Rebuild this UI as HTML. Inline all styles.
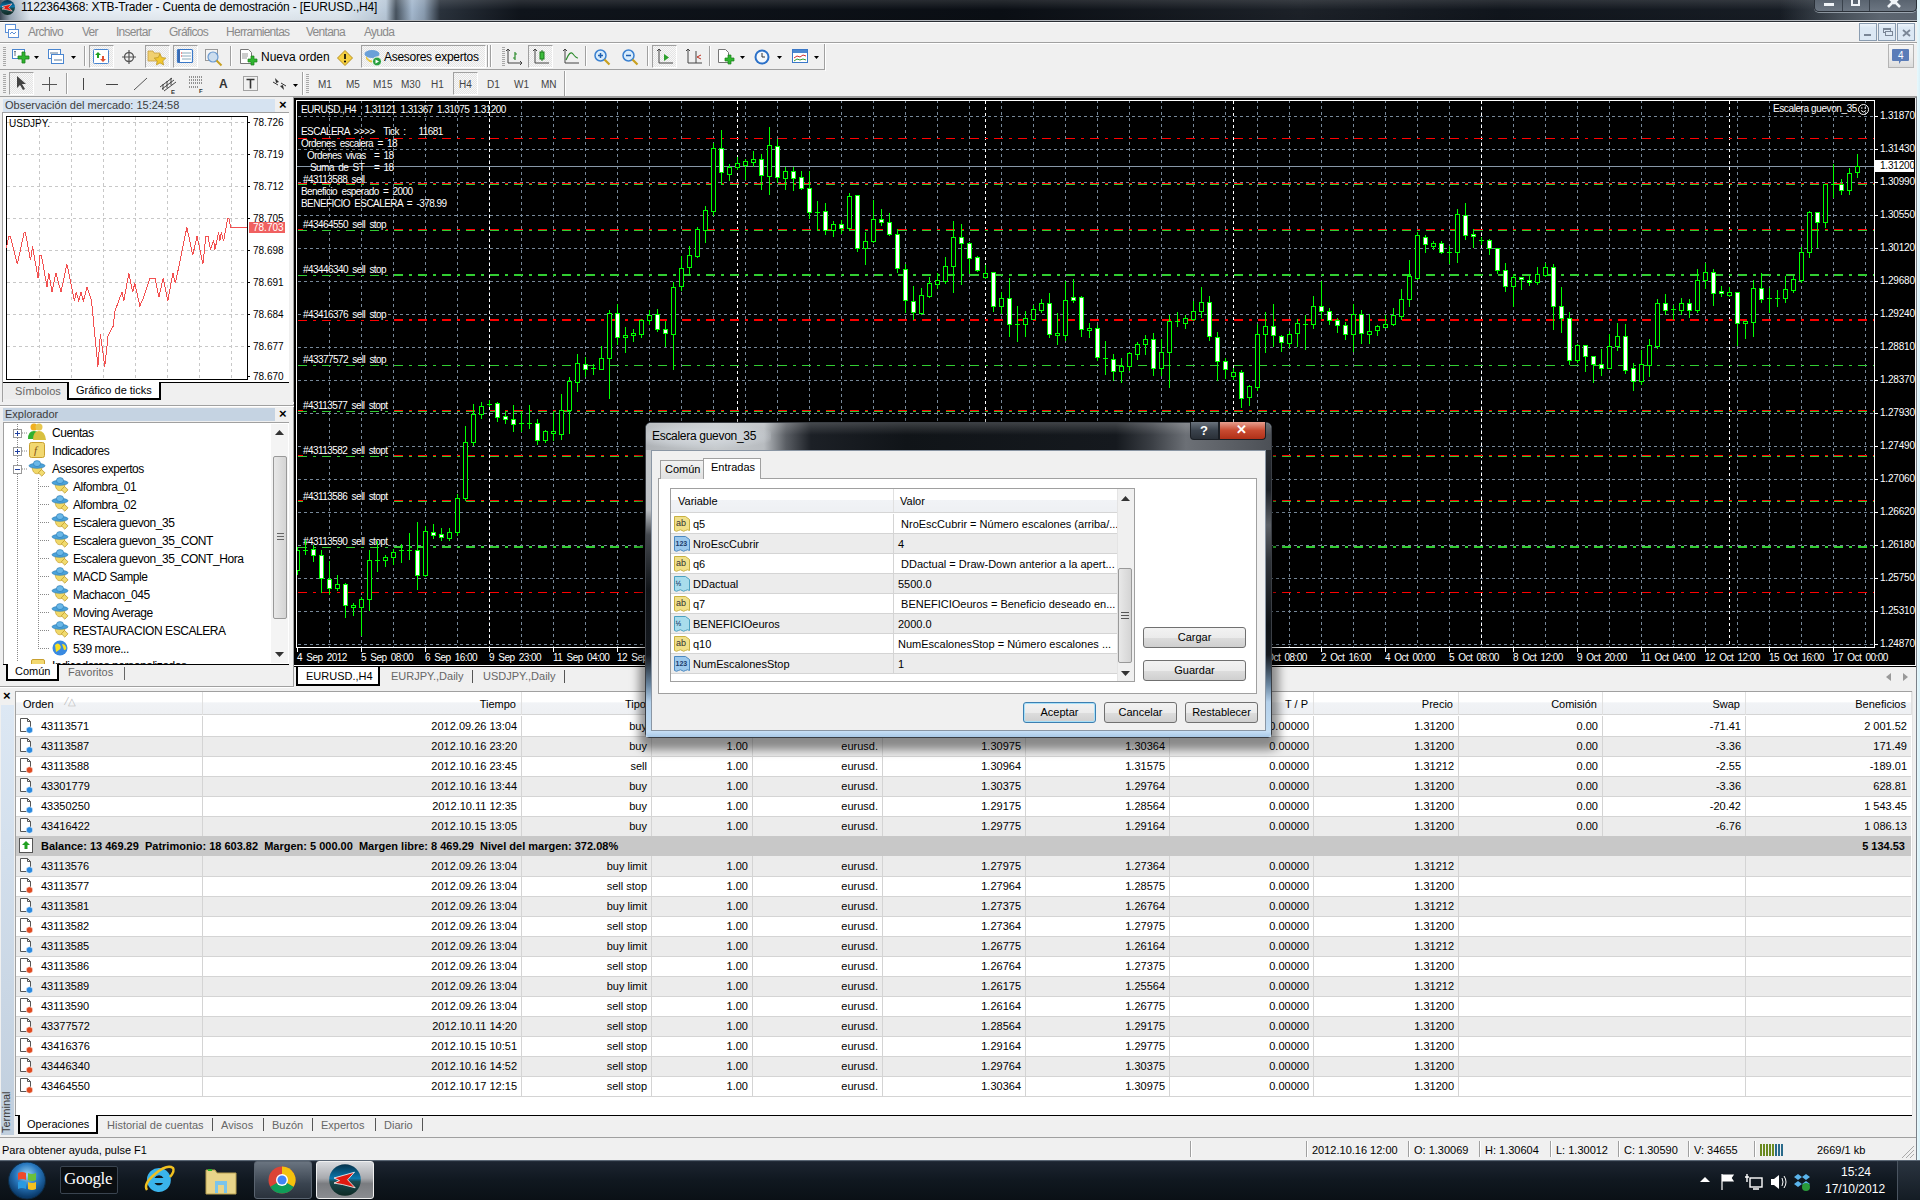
<!DOCTYPE html><html><head><meta charset="utf-8"><style>
*{margin:0;padding:0;box-sizing:border-box}
html,body{width:1920px;height:1200px;overflow:hidden;background:#f0f0f0;font-family:"Liberation Sans",sans-serif;font-size:11px;color:#000}
.abs{position:absolute}
.t{position:absolute;white-space:nowrap;line-height:1}
svg{position:absolute;overflow:visible}
</style></head><body>
<div class="abs" style="left:0px;top:0px;width:1920px;height:20px;background:linear-gradient(90deg,#3a4652 0px,#9aa8b6 10px,#e2eaf2 30px,#eaf0f6 200px,#dfe8f0 340px,#b8c8d8 386px,#46525e 396px,#a4b8ce 412px,#8a9cb0 424px,#2a323c 440px,#0f141b 520px,#0a0e14 1000px,#1c2128 1300px,#10151c 1500px,#1a2028 1920px)"></div><div class="abs" style="left:0px;top:0px;width:1920px;height:20px;background:linear-gradient(180deg,rgba(255,255,255,.12) 0,rgba(255,255,255,0) 50%,rgba(0,0,0,.04) 100%)"></div><div class="abs" style="left:0px;top:20px;width:1920px;height:1px;background:#b4b8bd"></div><svg style="left:0px;top:0px" width="16" height="16" viewBox="0 0 16 16"><defs><linearGradient id="xtbt" x1="0" y1="0" x2="0" y2="1"><stop offset="0" stop-color="#06324a"/><stop offset=".45" stop-color="#0a78ae"/><stop offset=".55" stop-color="#1a4a50"/><stop offset="1" stop-color="#0e2a24"/></linearGradient></defs><circle cx="7.5" cy="7.5" r="7.5" fill="url(#xtbt)"/><path d="M2 6.5 L12 3.8 L8.7 7.4 L12.3 11.2 L6.4 9.7 L2 9 L4.8 7.8 Z" fill="#e01a10" stroke="#fff" stroke-width="0.5"/></svg><div class="t" style="left:21px;top:1px;font-size:12px;color:#000;letter-spacing:-0.16px">1122364368: XTB-Trader - Cuenta de demostración - [EURUSD.,H4]</div><div class="abs" style="left:1780px;top:0px;width:140px;height:20px;background:linear-gradient(90deg,rgba(90,100,110,0) 0,rgba(90,100,110,.7) 60px,#5c6570 100px,#5a636e 140px)"></div><div class="abs" style="left:1814px;top:0px;width:103px;height:12px;border:1px solid #2a3038;border-top:none;border-radius:0 0 5px 5px;background:linear-gradient(180deg,#5a6470,#6c7682);box-shadow:0 1px 0 rgba(220,230,240,.5)"></div><div class="abs" style="left:1842px;top:0px;width:1px;height:11px;background:#3a424c"></div><div class="abs" style="left:1869px;top:0px;width:1px;height:11px;background:#3a424c"></div><div class="abs" style="left:1824px;top:3px;width:10px;height:3px;background:#f0f4f8"></div><div class="abs" style="left:1851px;top:0px;width:9px;height:6px;border:2px solid #f0f4f8;border-top:none"></div><svg style="left:1887px;top:0px" width="14" height="7" viewBox="0 0 14 7"><path d="M1 -3L7 3L13 -3M1 7L7 1L13 7" stroke="#f0f4f8" stroke-width="2.6" fill="none"/></svg><div class="abs" style="left:0px;top:21px;width:1920px;height:1px;background:#2a2e34"></div><div class="abs" style="left:0px;top:22px;width:1920px;height:1px;background:#fff"></div><div class="abs" style="left:0px;top:23px;width:1920px;height:19px;background:#f0f0f0"></div><div class="abs" style="left:0px;top:42px;width:1920px;height:1px;background:#a0a0a0"></div><svg style="left:5px;top:24px" width="15" height="14" viewBox="0 0 15 14"><rect x="0.5" y="0.5" width="10" height="8" fill="#fff" stroke="#5b8fd6"/><rect x="3.5" y="5.5" width="10" height="8" fill="#fff" stroke="#5b8fd6"/><path d="M5 10 l2 -2 l2 2 l2 -2" stroke="#5b8fd6" fill="none"/></svg><div class="t" style="left:28px;top:26px;font-size:12px;color:#8a8a8a;letter-spacing:-0.72px">Archivo</div><div class="t" style="left:82px;top:26px;font-size:12px;color:#8a8a8a;letter-spacing:-0.72px">Ver</div><div class="t" style="left:116px;top:26px;font-size:12px;color:#8a8a8a;letter-spacing:-0.72px">Insertar</div><div class="t" style="left:169px;top:26px;font-size:12px;color:#8a8a8a;letter-spacing:-0.72px">Gráficos</div><div class="t" style="left:226px;top:26px;font-size:12px;color:#8a8a8a;letter-spacing:-0.72px">Herramientas</div><div class="t" style="left:306px;top:26px;font-size:12px;color:#8a8a8a;letter-spacing:-0.72px">Ventana</div><div class="t" style="left:364px;top:26px;font-size:12px;color:#8a8a8a;letter-spacing:-0.72px">Ayuda</div><div class="abs" style="left:1859px;top:23px;width:18px;height:18px;border:1px solid #8a9cb0;background:linear-gradient(180deg,#eef4fa 0,#dce8f4 25%,#dce8f4 100%)"></div><div class="abs" style="left:1878px;top:23px;width:18px;height:18px;border:1px solid #8a9cb0;background:linear-gradient(180deg,#eef4fa 0,#dce8f4 25%,#dce8f4 100%)"></div><div class="abs" style="left:1897px;top:23px;width:18px;height:18px;border:1px solid #8a9cb0;background:linear-gradient(180deg,#eef4fa 0,#dce8f4 25%,#dce8f4 100%)"></div><div class="abs" style="left:1864px;top:34px;width:7px;height:2px;background:#7a8696"></div><div class="abs" style="left:1883px;top:28px;width:8px;height:5px;border:1px solid #7a8696;border-top-width:2px"></div><div class="abs" style="left:1885px;top:31px;width:8px;height:5px;border:1px solid #7a8696;background:#dce8f4"></div><svg style="left:1902px;top:29px" width="9" height="8" viewBox="0 0 9 8"><path d="M1 1L8 7M8 1L1 7" stroke="#7a8696" stroke-width="1.8"/></svg><div class="abs" style="left:0px;top:43px;width:1920px;height:26px;background:#f0f0f0"></div><div class="abs" style="left:0px;top:69px;width:825px;height:1px;background:#a0a0a0"></div><div class="abs" style="left:0px;top:70px;width:826px;height:1px;background:#fff"></div><div class="abs" style="left:0px;top:43px;width:1916px;height:1px;background:#fff"></div><div class="abs" style="left:0px;top:70px;width:1920px;height:26px;background:#f0f0f0"></div><div class="abs" style="left:0px;top:96px;width:1920px;height:1px;background:#a0a0a0"></div><div class="abs" style="left:3px;top:47px;width:3px;height:19px;background:repeating-linear-gradient(180deg,#a8a8a8 0 1px,transparent 1px 2px)"></div><svg style="left:12px;top:49px" width="17" height="15" viewBox="0 0 17 15"><rect x="0.5" y="0.5" width="12" height="9" fill="#fff" stroke="#4a86d0"/><path d="M3 2v5M2 3l1-1 1 1" stroke="#6a7a8a" fill="none"/><path d="M9 6h4v-4h3v4h4v3h-4v4h-3v-4h-4z" transform="translate(-3,1)" fill="#2fb52f" stroke="#1a7f1a" stroke-width="0.8"/></svg><svg style="left:34px;top:56px" width="5" height="3" viewBox="0 0 5 3"><path d="M0 0h5l-2.5 3z" fill="#000"/></svg><svg style="left:48px;top:49px" width="18" height="16" viewBox="0 0 18 16"><rect x="0.5" y="0.5" width="12" height="9" fill="#fff" stroke="#4a86d0"/><rect x="3.5" y="5.5" width="12" height="9" fill="#fff" stroke="#4a86d0"/><path d="M2 4h8M6 11h8" stroke="#5a7a9a"/></svg><svg style="left:71px;top:56px" width="5" height="3" viewBox="0 0 5 3"><path d="M0 0h5l-2.5 3z" fill="#000"/></svg><div class="abs" style="left:84px;top:46px;width:1px;height:20px;background:#a0a0a0"></div><div class="abs" style="left:85px;top:46px;width:1px;height:20px;background:#fff"></div><div class="abs" style="left:89px;top:45px;width:25px;height:23px;border-top:1px solid #a0a0a0;border-left:1px solid #a0a0a0;border-right:1px solid #fff;border-bottom:1px solid #fff;background:repeating-conic-gradient(#f8f8f8 0 25%,#e4e4e4 0 50%) 0 0/2px 2px"></div><svg style="left:93px;top:49px" width="17" height="16" viewBox="0 0 17 16"><rect x="0.5" y="0.5" width="15" height="14" fill="#fff" stroke="#4a86d0" rx="1"/><path d="M5 3l-3 3h2v3h2v-3h2z" fill="#20a020"/><path d="M10 13l3-3h-2v-3h-2v3h-2z" fill="#e05030"/></svg><svg style="left:122px;top:50px" width="15" height="15" viewBox="0 0 15 15"><circle cx="7" cy="7" r="4.5" fill="none" stroke="#555" stroke-width="1.3"/><path d="M7 0v14M0 7h14" stroke="#555" stroke-width="1.2"/></svg><div class="abs" style="left:145px;top:45px;width:25px;height:23px;border-top:1px solid #a0a0a0;border-left:1px solid #a0a0a0;border-right:1px solid #fff;border-bottom:1px solid #fff;background:repeating-conic-gradient(#f8f8f8 0 25%,#e4e4e4 0 50%) 0 0/2px 2px"></div><svg style="left:148px;top:49px" width="18" height="16" viewBox="0 0 18 16"><path d="M0 2h5l1 2h6v8h-12z" fill="#f0d070" stroke="#c8a040" stroke-width="0.8"/><path d="M12 5l1.8 3.6 4 .5-3 2.8.8 4-3.6-2-3.6 2 .8-4-3-2.8 4-.5z" fill="#f2c830" stroke="#b89020" stroke-width="0.7"/></svg><div class="abs" style="left:173px;top:45px;width:25px;height:23px;border-top:1px solid #a0a0a0;border-left:1px solid #a0a0a0;border-right:1px solid #fff;border-bottom:1px solid #fff;background:repeating-conic-gradient(#f8f8f8 0 25%,#e4e4e4 0 50%) 0 0/2px 2px"></div><svg style="left:177px;top:49px" width="16" height="15" viewBox="0 0 16 15"><rect x="0.5" y="0.5" width="15" height="13" fill="#fff" stroke="#3a78c8" stroke-width="1.2" rx="1"/><rect x="1" y="1" width="2" height="12" fill="#3a6ab0"/><path d="M5 4h9M5 7h9M5 10h9" stroke="#8ab"/><path d="M4 4h1M4 7h1" stroke="#d22"/></svg><svg style="left:205px;top:49px" width="18" height="18" viewBox="0 0 18 18"><rect x="0.5" y="0.5" width="12" height="11" fill="#f4f4f4" stroke="#999"/><circle cx="8" cy="8" r="5" fill="#cde" stroke="#6a9ad0" stroke-width="1.2"/><path d="M11.5 11.5l5 5" stroke="#c8a020" stroke-width="2"/></svg><div class="abs" style="left:230px;top:46px;width:1px;height:20px;background:#a0a0a0"></div><div class="abs" style="left:231px;top:46px;width:1px;height:20px;background:#fff"></div><svg style="left:240px;top:49px" width="18" height="18" viewBox="0 0 18 18"><path d="M0.5 0.5h8l3 3v11h-11z" fill="#fff" stroke="#777"/><path d="M2 5h6M2 7h6M2 9h5" stroke="#999"/><path d="M8 10h3v-3h3v3h3v3h-3v3h-3v-3h-3z" fill="#2fb52f" stroke="#1a7f1a" stroke-width="0.7"/></svg><div class="t" style="left:261px;top:51px;font-size:12px;color:#000">Nueva orden</div><svg style="left:337px;top:50px" width="16" height="16" viewBox="0 0 16 16"><path d="M8 0.5l7.5 7.5-7.5 7.5-7.5-7.5z" fill="#f5d040" stroke="#b89020"/><path d="M8 4v5" stroke="#000" stroke-width="1.6"/><circle cx="8" cy="11.5" r="1" fill="#000"/></svg><div class="abs" style="left:361px;top:45px;width:125px;height:23px;border-top:1px solid #a0a0a0;border-left:1px solid #a0a0a0;border-right:1px solid #fff;border-bottom:1px solid #fff;background:repeating-conic-gradient(#f8f8f8 0 25%,#e4e4e4 0 50%) 0 0/2px 2px"></div><svg style="left:364px;top:49px" width="18" height="17" viewBox="0 0 18 17"><ellipse cx="8" cy="5" rx="7.5" ry="4" fill="#6aa0d8"/><path d="M2 7q6 9 12 0v3q-6 7-12 0z" fill="#e8c840"/><circle cx="13" cy="12.5" r="4.5" fill="#2aa040" stroke="#fff"/><path d="M11.5 10.5l3.5 2-3.5 2z" fill="#fff"/></svg><div class="t" style="left:384px;top:51px;font-size:12px;color:#000;letter-spacing:-0.28px">Asesores expertos</div><div class="abs" style="left:487px;top:45px;width:1px;height:22px;background:#a0a0a0"></div><div class="abs" style="left:488px;top:45px;width:1px;height:22px;background:#fff"></div><div class="abs" style="left:490px;top:45px;width:1px;height:22px;background:#a0a0a0"></div><div class="abs" style="left:491px;top:45px;width:1px;height:22px;background:#fff"></div><div class="abs" style="left:502px;top:47px;width:3px;height:19px;background:repeating-linear-gradient(180deg,#a8a8a8 0 1px,transparent 1px 2px)"></div><svg style="left:506px;top:49px" width="16" height="16" viewBox="0 0 16 16"><path d="M2 0v14h14M0 2l2-2 2 2M14 12l2 2-2 2" stroke="#444" fill="none"/><path d="M9 3v8M7 9h2M9 5h2" stroke="#2a8a2a" stroke-width="1.2"/></svg><div class="abs" style="left:528px;top:45px;width:25px;height:23px;border-top:1px solid #a0a0a0;border-left:1px solid #a0a0a0;border-right:1px solid #fff;border-bottom:1px solid #fff;background:repeating-conic-gradient(#f8f8f8 0 25%,#e4e4e4 0 50%) 0 0/2px 2px"></div><svg style="left:533px;top:49px" width="16" height="16" viewBox="0 0 16 16"><path d="M2 0v14h14M0 2l2-2 2 2" stroke="#444" fill="none"/><rect x="7" y="3" width="4" height="7" fill="#3cbc3c" stroke="#1a7a1a"/><path d="M9 1v2M9 10v2" stroke="#1a7a1a"/></svg><svg style="left:563px;top:49px" width="16" height="16" viewBox="0 0 16 16"><path d="M2 0v14h14M0 2l2-2 2 2" stroke="#444" fill="none"/><path d="M3 11q4-10 7-6t5 4" stroke="#2a8a2a" fill="none" stroke-width="1.2"/></svg><div class="abs" style="left:585px;top:46px;width:1px;height:20px;background:#a0a0a0"></div><div class="abs" style="left:586px;top:46px;width:1px;height:20px;background:#fff"></div><svg style="left:594px;top:49px" width="17" height="17" viewBox="0 0 17 17"><circle cx="6.5" cy="6.5" r="5.5" fill="#d8ecfc" stroke="#3a80d0" stroke-width="1.5"/><path d="M4 6.5h5M6.5 4v5" stroke="#2060b0" stroke-width="1.5"/><path d="M10.5 10.5l5 5" stroke="#c8a020" stroke-width="2.2"/></svg><svg style="left:622px;top:49px" width="17" height="17" viewBox="0 0 17 17"><circle cx="6.5" cy="6.5" r="5.5" fill="#d8ecfc" stroke="#3a80d0" stroke-width="1.5"/><path d="M4 6.5h5" stroke="#2060b0" stroke-width="1.5"/><path d="M10.5 10.5l5 5" stroke="#c8a020" stroke-width="2.2"/></svg><div class="abs" style="left:647px;top:46px;width:1px;height:20px;background:#a0a0a0"></div><div class="abs" style="left:648px;top:46px;width:1px;height:20px;background:#fff"></div><div class="abs" style="left:652px;top:45px;width:25px;height:23px;border-top:1px solid #a0a0a0;border-left:1px solid #a0a0a0;border-right:1px solid #fff;border-bottom:1px solid #fff;background:repeating-conic-gradient(#f8f8f8 0 25%,#e4e4e4 0 50%) 0 0/2px 2px"></div><svg style="left:657px;top:49px" width="16" height="16" viewBox="0 0 16 16"><path d="M2 0v14h14M0 2l2-2 2 2" stroke="#444" fill="none"/><path d="M7 5l5 3.5-5 3.5z" fill="#2aa02a"/></svg><svg style="left:686px;top:49px" width="16" height="16" viewBox="0 0 16 16"><path d="M2 0v14h14M0 2l2-2 2 2M10 2v12" stroke="#444" fill="none"/><path d="M15 6l-4 2 4 2" stroke="#c03020" fill="none"/></svg><div class="abs" style="left:709px;top:46px;width:1px;height:20px;background:#a0a0a0"></div><div class="abs" style="left:710px;top:46px;width:1px;height:20px;background:#fff"></div><svg style="left:718px;top:49px" width="18" height="18" viewBox="0 0 18 18"><path d="M0.5 0.5h7l3 3v10h-10z" fill="#fff" stroke="#777"/><path d="M7 9h3v-3h3v3h3v3h-3v3h-3v-3h-3z" fill="#2fb52f" stroke="#1a7f1a" stroke-width="0.7"/></svg><svg style="left:740px;top:56px" width="5" height="3" viewBox="0 0 5 3"><path d="M0 0h5l-2.5 3z" fill="#000"/></svg><svg style="left:754px;top:49px" width="17" height="17" viewBox="0 0 17 17"><circle cx="8" cy="8" r="7.5" fill="#2a70c8"/><circle cx="8" cy="8" r="5.5" fill="#f4f8fc"/><path d="M8 4v4h3" stroke="#333" fill="none"/></svg><svg style="left:777px;top:56px" width="5" height="3" viewBox="0 0 5 3"><path d="M0 0h5l-2.5 3z" fill="#000"/></svg><svg style="left:792px;top:49px" width="17" height="16" viewBox="0 0 17 16"><rect x="0.5" y="0.5" width="15" height="13" fill="#fff" stroke="#3a78c8"/><rect x="1" y="1" width="14" height="3" fill="#4a88d0"/><path d="M2 9l3-2 3 1 3-2 3 1" stroke="#d03030" fill="none"/><path d="M2 12l3-2 3 1 3-1 3 1" stroke="#30a030" fill="none"/></svg><svg style="left:814px;top:56px" width="5" height="3" viewBox="0 0 5 3"><path d="M0 0h5l-2.5 3z" fill="#000"/></svg><div class="abs" style="left:824px;top:44px;width:1px;height:26px;background:#a0a0a0"></div><div class="abs" style="left:825px;top:44px;width:1px;height:27px;background:#fff"></div><div class="abs" style="left:1888px;top:44px;width:26px;height:24px;border:1px solid #b4b4b4;background:linear-gradient(180deg,#f4f4f4 0,#ececec 55%,#dcdcdc 100%)"></div><svg style="left:1893px;top:49px" width="16" height="16" viewBox="0 0 16 16"><path d="M1 0h14q1 0 1 1v10q0 1-1 1h-7l-2 3v-3h-6q-1 0-1-1v-10q0-1 1-1z" fill="#5a7cb8"/></svg><div class="t" style="left:1898px;top:51px;font-size:10px;color:#fff">4</div><div class="abs" style="left:3px;top:74px;width:3px;height:19px;background:repeating-linear-gradient(180deg,#a8a8a8 0 1px,transparent 1px 2px)"></div><div class="abs" style="left:9px;top:72px;width:25px;height:23px;border-top:1px solid #a0a0a0;border-left:1px solid #a0a0a0;border-right:1px solid #fff;border-bottom:1px solid #fff;background:repeating-conic-gradient(#f8f8f8 0 25%,#e4e4e4 0 50%) 0 0/2px 2px"></div><svg style="left:16px;top:76px" width="10" height="15" viewBox="0 0 10 15"><path d="M1 0v12l3-3 3 5 2-1-3-5h4z" fill="#444"/></svg><svg style="left:42px;top:77px" width="16" height="15" viewBox="0 0 16 15"><path d="M7.5 0v14M0 7.5h15" stroke="#555"/></svg><div class="abs" style="left:66px;top:73px;width:1px;height:21px;background:#a0a0a0"></div><div class="abs" style="left:67px;top:73px;width:1px;height:21px;background:#fff"></div><div class="abs" style="left:83px;top:78px;width:1px;height:12px;background:#444"></div><div class="abs" style="left:106px;top:84px;width:12px;height:1px;background:#444"></div><svg style="left:134px;top:78px" width="13" height="12" viewBox="0 0 13 12"><path d="M0 12L13 0" stroke="#555"/></svg><svg style="left:160px;top:76px" width="16" height="18" viewBox="0 0 16 18"><path d="M0 11l12-9M2 13l12-9M4 15l12-9M3 8v6M7 5v7M11 2v7" stroke="#333" stroke-width="0.9"/><text x="11" y="18" font-size="6" font-family="Liberation Sans" font-weight="bold" fill="#333">E</text></svg><svg style="left:189px;top:76px" width="16" height="18" viewBox="0 0 16 18"><path d="M0 1h13M0 4h13M0 7h13M0 11h9" stroke="#333" stroke-dasharray="1 1"/><text x="10" y="17" font-size="6" font-family="Liberation Sans" font-weight="bold" fill="#333">F</text></svg><div class="t" style="left:219px;top:78px;font-size:12px;color:#333;font-weight:bold">A</div><svg style="left:243px;top:76px" width="16" height="16" viewBox="0 0 16 16"><rect x="0.5" y="0.5" width="14" height="14" fill="none" stroke="#555" stroke-dasharray="1 1"/><path d="M3.5 3.5h8M7.5 3.5v9" stroke="#333" stroke-width="1.6"/></svg><svg style="left:273px;top:77px" width="18" height="14" viewBox="0 0 18 14"><path d="M2 1l4 4-3 1z" fill="#333"/><path d="M0 5l5 3" stroke="#333"/><path d="M11 13l-4-4 3-1z" fill="#333"/><path d="M13 9l-5-3" stroke="#333"/></svg><svg style="left:293px;top:84px" width="5" height="3" viewBox="0 0 5 3"><path d="M0 0h5l-2.5 3z" fill="#000"/></svg><div class="abs" style="left:302px;top:72px;width:1px;height:23px;background:#a0a0a0"></div><div class="abs" style="left:303px;top:72px;width:1px;height:23px;background:#fff"></div><div class="abs" style="left:306px;top:74px;width:3px;height:19px;background:repeating-linear-gradient(180deg,#a8a8a8 0 1px,transparent 1px 2px)"></div><div class="t" style="left:318px;top:80px;font-size:10px;color:#444">M1</div><div class="t" style="left:346px;top:80px;font-size:10px;color:#444">M5</div><div class="t" style="left:373px;top:80px;font-size:10px;color:#444">M15</div><div class="t" style="left:401px;top:80px;font-size:10px;color:#444">M30</div><div class="t" style="left:431px;top:80px;font-size:10px;color:#444">H1</div><div class="abs" style="left:453px;top:72px;width:25px;height:23px;border-top:1px solid #a0a0a0;border-left:1px solid #a0a0a0;border-right:1px solid #fff;border-bottom:1px solid #fff;background:repeating-conic-gradient(#f8f8f8 0 25%,#e4e4e4 0 50%) 0 0/2px 2px"></div><div class="t" style="left:459px;top:80px;font-size:10px;color:#444">H4</div><div class="t" style="left:487px;top:80px;font-size:10px;color:#444">D1</div><div class="t" style="left:514px;top:80px;font-size:10px;color:#444">W1</div><div class="t" style="left:541px;top:80px;font-size:10px;color:#444">MN</div><div class="abs" style="left:564px;top:71px;width:1px;height:25px;background:#a0a0a0"></div><div class="abs" style="left:565px;top:71px;width:1px;height:25px;background:#fff"></div><div class="abs" style="left:0px;top:97px;width:294px;height:591px;background:#f0f0f0"></div><div class="abs" style="left:293px;top:97px;width:1px;height:591px;background:#a0a0a0"></div><div class="abs" style="left:3px;top:99px;width:272px;height:13px;background:#d6e3f1"></div><div class="t" style="left:5px;top:100px;font-size:11px;color:#3c3c3c">Observación del mercado: 15:24:58</div><div class="t" style="left:279px;top:98px;font-size:13px;font-weight:bold;color:#000">×</div><div class="abs" style="left:3px;top:112px;width:286px;height:1px;background:#a0a0a0"></div><div class="abs" style="left:3px;top:113px;width:286px;height:269px;background:#fff"></div><div class="abs" style="left:2px;top:112px;width:1px;height:290px;background:#a0a0a0"></div><div class="abs" style="left:6px;top:116px;width:242px;height:264px;border:1px solid #000;background:#fff"></div><svg style="left:6px;top:116px" width="242" height="264" viewBox="0 0 242 264"><path d="M33.5 1V263" stroke="#c8c8c8" stroke-dasharray="3 3"/><path d="M65.5 1V263" stroke="#c8c8c8" stroke-dasharray="3 3"/><path d="M97.5 1V263" stroke="#c8c8c8" stroke-dasharray="3 3"/><path d="M129.5 1V263" stroke="#c8c8c8" stroke-dasharray="3 3"/><path d="M161.5 1V263" stroke="#c8c8c8" stroke-dasharray="3 3"/><path d="M193.5 1V263" stroke="#c8c8c8" stroke-dasharray="3 3"/><path d="M225.5 1V263" stroke="#c8c8c8" stroke-dasharray="3 3"/><path d="M1 6.5H240" stroke="#c8c8c8" stroke-dasharray="3 3"/><path d="M1 38.5H240" stroke="#c8c8c8" stroke-dasharray="3 3"/><path d="M1 70.5H240" stroke="#c8c8c8" stroke-dasharray="3 3"/><path d="M1 102.5H240" stroke="#c8c8c8" stroke-dasharray="3 3"/><path d="M1 134.5H240" stroke="#c8c8c8" stroke-dasharray="3 3"/><path d="M1 166.5H240" stroke="#c8c8c8" stroke-dasharray="3 3"/><path d="M1 198.5H240" stroke="#c8c8c8" stroke-dasharray="3 3"/><path d="M1 230.5H240" stroke="#c8c8c8" stroke-dasharray="3 3"/></svg><div class="abs" style="left:248px;top:122px;width:2px;height:1px;background:#000"></div><div class="t" style="left:253px;top:118px;font-size:10px;color:#000">78.726</div><div class="abs" style="left:248px;top:154px;width:2px;height:1px;background:#000"></div><div class="t" style="left:253px;top:150px;font-size:10px;color:#000">78.719</div><div class="abs" style="left:248px;top:186px;width:2px;height:1px;background:#000"></div><div class="t" style="left:253px;top:182px;font-size:10px;color:#000">78.712</div><div class="abs" style="left:248px;top:218px;width:2px;height:1px;background:#000"></div><div class="t" style="left:253px;top:214px;font-size:10px;color:#000">78.705</div><div class="abs" style="left:248px;top:250px;width:2px;height:1px;background:#000"></div><div class="t" style="left:253px;top:246px;font-size:10px;color:#000">78.698</div><div class="abs" style="left:248px;top:282px;width:2px;height:1px;background:#000"></div><div class="t" style="left:253px;top:278px;font-size:10px;color:#000">78.691</div><div class="abs" style="left:248px;top:314px;width:2px;height:1px;background:#000"></div><div class="t" style="left:253px;top:310px;font-size:10px;color:#000">78.684</div><div class="abs" style="left:248px;top:346px;width:2px;height:1px;background:#000"></div><div class="t" style="left:253px;top:342px;font-size:10px;color:#000">78.677</div><div class="abs" style="left:248px;top:376px;width:2px;height:1px;background:#000"></div><div class="t" style="left:253px;top:372px;font-size:10px;color:#000">78.670</div><div class="abs" style="left:249px;top:222px;width:36px;height:11px;background:#f06060"></div><div class="t" style="left:253px;top:223px;font-size:10px;color:#fff">78.703</div><div class="t" style="left:9px;top:119px;font-size:10px;color:#000">USDJPY.</div><svg style="left:0px;top:0px" width="300" height="400" viewBox="0 0 300 400"><path d="M6.4 247.6 L8.9 236.1 L10.2 236.1 L17.3 264.1 L24.2 232.3 L25.4 232.3 L30.5 260.3 L32.5 246.3 L38.1 278.1 L39.9 255.2 L41.4 255.2 L47.0 287.0 L48.8 273.0 L52.1 292.1 L55.9 273.0 L61.0 292.1 L66.9 264.1 L74.5 300.9 L76.3 292.1 L78.8 300.9 L80.9 292.1 L83.4 300.9 L87.0 287.0 L91.5 300.9 L97.9 366.5 L100.4 334.0 L104.8 366.5 L108.1 335.3 L113.1 326.4 L114.9 311.1 L122.0 292.1 L123.8 300.9 L128.9 273.0 L132.7 292.1 L134.8 283.2 L139.8 306.0 L143.7 297.1 L150.0 278.1 L155.1 278.1 L158.9 297.1 L163.2 278.1 L167.8 300.9 L172.9 273.0 L175.4 283.2 L186.9 227.2 L192.7 255.2 L197.1 236.1 L202.9 264.1 L205.9 236.1 L208.0 236.1 L210.5 250.1 L213.6 239.9 L214.8 250.1 L218.7 232.3 L219.9 241.2 L221.2 232.3 L223.7 241.2 L227.6 218.3 L228.8 218.3 L230.6 227.2 L247.1 227.2" stroke="#f25050" fill="none" stroke-width="1" shape-rendering="crispEdges"/></svg><div class="abs" style="left:3px;top:380px;width:286px;height:2px;background:#fff"></div><div class="abs" style="left:3px;top:382px;width:286px;height:1px;background:#000"></div><div class="abs" style="left:4px;top:383px;width:63px;height:16px;background:#ececec"></div><div class="t" style="left:15px;top:386px;font-size:11px;color:#666">Símbolos</div><div class="abs" style="left:67px;top:382px;width:94px;height:18px;border:2px solid #000;border-top:none;background:#fff"></div><div class="t" style="left:76px;top:385px;font-size:11px;color:#000">Gráfico de ticks</div><div class="abs" style="left:0px;top:402px;width:294px;height:2px;background:#f0f0f0"></div><div class="abs" style="left:0px;top:405px;width:294px;height:1px;background:#a0a0a0"></div><div class="abs" style="left:0px;top:406px;width:294px;height:1px;background:#fff"></div><div class="abs" style="left:3px;top:408px;width:272px;height:13px;background:#c5d3e2"></div><div class="t" style="left:5px;top:409px;font-size:11px;color:#3c3c3c">Explorador</div><div class="t" style="left:279px;top:407px;font-size:13px;font-weight:bold;color:#000">×</div><div class="abs" style="left:3px;top:422px;width:286px;height:242px;background:#fff;border-top:1px solid #a0a0a0;border-left:1px solid #a0a0a0"></div><div class="abs" style="left:271px;top:424px;width:17px;height:239px;background:#f4f4f4"></div><svg style="left:275px;top:430px" width="9" height="5" viewBox="0 0 9 5"><path d="M0 5l4.5-5 4.5 5z" fill="#333"/></svg><svg style="left:275px;top:652px" width="9" height="5" viewBox="0 0 9 5"><path d="M0 0l4.5 5 4.5-5z" fill="#333"/></svg><div class="abs" style="left:273px;top:456px;width:14px;height:163px;border:1px solid #999;border-radius:2px;background:linear-gradient(90deg,#e8e8e8,#d4d4d4)"></div><div class="abs" style="left:277px;top:533px;width:7px;height:1px;background:#666"></div><div class="abs" style="left:277px;top:536px;width:7px;height:1px;background:#666"></div><div class="abs" style="left:277px;top:539px;width:7px;height:1px;background:#666"></div><svg style="left:0px;top:0px" width="300" height="700" viewBox="0 0 300 700"><path d="M17.5 424V662M38.5 478V648M22 433H28M22 451H28M22 469H28" stroke="#888" stroke-dasharray="1 1"/><path d="M38 486.5H50" stroke="#888" stroke-dasharray="1 1"/><path d="M38 504.5H50" stroke="#888" stroke-dasharray="1 1"/><path d="M38 522.5H50" stroke="#888" stroke-dasharray="1 1"/><path d="M38 540.5H50" stroke="#888" stroke-dasharray="1 1"/><path d="M38 558.5H50" stroke="#888" stroke-dasharray="1 1"/><path d="M38 576.5H50" stroke="#888" stroke-dasharray="1 1"/><path d="M38 594.5H50" stroke="#888" stroke-dasharray="1 1"/><path d="M38 612.5H50" stroke="#888" stroke-dasharray="1 1"/><path d="M38 630.5H50" stroke="#888" stroke-dasharray="1 1"/><path d="M38 648.5H50" stroke="#888" stroke-dasharray="1 1"/></svg><div class="abs" style="left:13px;top:429px;width:9px;height:9px;border:1px solid #999;background:#fff"></div><div class="abs" style="left:15px;top:433px;width:5px;height:1px;background:#2040a0"></div><div class="abs" style="left:17px;top:431px;width:1px;height:5px;background:#2040a0"></div><div class="abs" style="left:13px;top:447px;width:9px;height:9px;border:1px solid #999;background:#fff"></div><div class="abs" style="left:15px;top:451px;width:5px;height:1px;background:#2040a0"></div><div class="abs" style="left:17px;top:449px;width:1px;height:5px;background:#2040a0"></div><div class="abs" style="left:13px;top:465px;width:9px;height:9px;border:1px solid #999;background:#fff"></div><div class="abs" style="left:15px;top:469px;width:5px;height:1px;background:#2040a0"></div><svg style="left:28px;top:423px" width="18" height="18" viewBox="0 0 18 18"><circle cx="6" cy="4" r="3.5" fill="#f0b020"/><circle cx="11" cy="4" r="3.5" fill="#e8c850"/><path d="M0 16q0-8 6-8t6 8z" fill="#30b030"/><path d="M5 17q0-9 6-9t7 9z" fill="#d8c040"/></svg><svg style="left:29px;top:442px" width="16" height="17" viewBox="0 0 16 17"><rect x="0.5" y="0.5" width="15" height="15" rx="2" fill="#f2d870" stroke="#c8a030"/><text x="5" y="12" font-size="11" font-style="italic" fill="#805010" font-family="Liberation Serif">f</text></svg><svg style="left:28px;top:460px" width="18" height="18" viewBox="0 0 18 18"><path d="M4 6.5 L14 6.5 Q13.5 13.8 9 13.8 Q4.5 13.8 4 6.5Z" fill="#f0d868" stroke="#c8a030" stroke-width=".7"/><path d="M13.5 9.5 L17 12.8 L13.8 16.2 L10.4 12.8 Z" fill="#f2dc70" stroke="#b89020" stroke-width=".7"/><ellipse cx="9" cy="5.8" rx="8" ry="2.5" fill="#4aa2da" stroke="#2a78b0" stroke-width=".6"/><ellipse cx="9" cy="3.6" rx="3.6" ry="3" fill="#6ab8e8" stroke="#2a78b0" stroke-width=".6"/></svg><svg style="left:51px;top:477px" width="18" height="18" viewBox="0 0 18 18"><path d="M4 6.5 L14 6.5 Q13.5 13.8 9 13.8 Q4.5 13.8 4 6.5Z" fill="#f0d868" stroke="#c8a030" stroke-width=".7"/><path d="M13.5 9.5 L17 12.8 L13.8 16.2 L10.4 12.8 Z" fill="#f2dc70" stroke="#b89020" stroke-width=".7"/><ellipse cx="9" cy="5.8" rx="8" ry="2.5" fill="#4aa2da" stroke="#2a78b0" stroke-width=".6"/><ellipse cx="9" cy="3.6" rx="3.6" ry="3" fill="#6ab8e8" stroke="#2a78b0" stroke-width=".6"/></svg><div class="t" style="left:73px;top:481px;font-size:12px;color:#000;letter-spacing:-0.44px">Alfombra_01</div><svg style="left:51px;top:495px" width="18" height="18" viewBox="0 0 18 18"><path d="M4 6.5 L14 6.5 Q13.5 13.8 9 13.8 Q4.5 13.8 4 6.5Z" fill="#f0d868" stroke="#c8a030" stroke-width=".7"/><path d="M13.5 9.5 L17 12.8 L13.8 16.2 L10.4 12.8 Z" fill="#f2dc70" stroke="#b89020" stroke-width=".7"/><ellipse cx="9" cy="5.8" rx="8" ry="2.5" fill="#4aa2da" stroke="#2a78b0" stroke-width=".6"/><ellipse cx="9" cy="3.6" rx="3.6" ry="3" fill="#6ab8e8" stroke="#2a78b0" stroke-width=".6"/></svg><div class="t" style="left:73px;top:499px;font-size:12px;color:#000;letter-spacing:-0.44px">Alfombra_02</div><svg style="left:51px;top:513px" width="18" height="18" viewBox="0 0 18 18"><path d="M4 6.5 L14 6.5 Q13.5 13.8 9 13.8 Q4.5 13.8 4 6.5Z" fill="#f0d868" stroke="#c8a030" stroke-width=".7"/><path d="M13.5 9.5 L17 12.8 L13.8 16.2 L10.4 12.8 Z" fill="#f2dc70" stroke="#b89020" stroke-width=".7"/><ellipse cx="9" cy="5.8" rx="8" ry="2.5" fill="#4aa2da" stroke="#2a78b0" stroke-width=".6"/><ellipse cx="9" cy="3.6" rx="3.6" ry="3" fill="#6ab8e8" stroke="#2a78b0" stroke-width=".6"/></svg><div class="t" style="left:73px;top:517px;font-size:12px;color:#000;letter-spacing:-0.44px">Escalera guevon_35</div><svg style="left:51px;top:531px" width="18" height="18" viewBox="0 0 18 18"><path d="M4 6.5 L14 6.5 Q13.5 13.8 9 13.8 Q4.5 13.8 4 6.5Z" fill="#f0d868" stroke="#c8a030" stroke-width=".7"/><path d="M13.5 9.5 L17 12.8 L13.8 16.2 L10.4 12.8 Z" fill="#f2dc70" stroke="#b89020" stroke-width=".7"/><ellipse cx="9" cy="5.8" rx="8" ry="2.5" fill="#4aa2da" stroke="#2a78b0" stroke-width=".6"/><ellipse cx="9" cy="3.6" rx="3.6" ry="3" fill="#6ab8e8" stroke="#2a78b0" stroke-width=".6"/></svg><div class="t" style="left:73px;top:535px;font-size:12px;color:#000;letter-spacing:-0.44px">Escalera guevon_35_CONT</div><svg style="left:51px;top:549px" width="18" height="18" viewBox="0 0 18 18"><path d="M4 6.5 L14 6.5 Q13.5 13.8 9 13.8 Q4.5 13.8 4 6.5Z" fill="#f0d868" stroke="#c8a030" stroke-width=".7"/><path d="M13.5 9.5 L17 12.8 L13.8 16.2 L10.4 12.8 Z" fill="#f2dc70" stroke="#b89020" stroke-width=".7"/><ellipse cx="9" cy="5.8" rx="8" ry="2.5" fill="#4aa2da" stroke="#2a78b0" stroke-width=".6"/><ellipse cx="9" cy="3.6" rx="3.6" ry="3" fill="#6ab8e8" stroke="#2a78b0" stroke-width=".6"/></svg><div class="t" style="left:73px;top:553px;font-size:12px;color:#000;letter-spacing:-0.44px">Escalera guevon_35_CONT_Hora</div><svg style="left:51px;top:567px" width="18" height="18" viewBox="0 0 18 18"><path d="M4 6.5 L14 6.5 Q13.5 13.8 9 13.8 Q4.5 13.8 4 6.5Z" fill="#f0d868" stroke="#c8a030" stroke-width=".7"/><path d="M13.5 9.5 L17 12.8 L13.8 16.2 L10.4 12.8 Z" fill="#f2dc70" stroke="#b89020" stroke-width=".7"/><ellipse cx="9" cy="5.8" rx="8" ry="2.5" fill="#4aa2da" stroke="#2a78b0" stroke-width=".6"/><ellipse cx="9" cy="3.6" rx="3.6" ry="3" fill="#6ab8e8" stroke="#2a78b0" stroke-width=".6"/></svg><div class="t" style="left:73px;top:571px;font-size:12px;color:#000;letter-spacing:-0.44px">MACD Sample</div><svg style="left:51px;top:585px" width="18" height="18" viewBox="0 0 18 18"><path d="M4 6.5 L14 6.5 Q13.5 13.8 9 13.8 Q4.5 13.8 4 6.5Z" fill="#f0d868" stroke="#c8a030" stroke-width=".7"/><path d="M13.5 9.5 L17 12.8 L13.8 16.2 L10.4 12.8 Z" fill="#f2dc70" stroke="#b89020" stroke-width=".7"/><ellipse cx="9" cy="5.8" rx="8" ry="2.5" fill="#4aa2da" stroke="#2a78b0" stroke-width=".6"/><ellipse cx="9" cy="3.6" rx="3.6" ry="3" fill="#6ab8e8" stroke="#2a78b0" stroke-width=".6"/></svg><div class="t" style="left:73px;top:589px;font-size:12px;color:#000;letter-spacing:-0.44px">Machacon_045</div><svg style="left:51px;top:603px" width="18" height="18" viewBox="0 0 18 18"><path d="M4 6.5 L14 6.5 Q13.5 13.8 9 13.8 Q4.5 13.8 4 6.5Z" fill="#f0d868" stroke="#c8a030" stroke-width=".7"/><path d="M13.5 9.5 L17 12.8 L13.8 16.2 L10.4 12.8 Z" fill="#f2dc70" stroke="#b89020" stroke-width=".7"/><ellipse cx="9" cy="5.8" rx="8" ry="2.5" fill="#4aa2da" stroke="#2a78b0" stroke-width=".6"/><ellipse cx="9" cy="3.6" rx="3.6" ry="3" fill="#6ab8e8" stroke="#2a78b0" stroke-width=".6"/></svg><div class="t" style="left:73px;top:607px;font-size:12px;color:#000;letter-spacing:-0.44px">Moving Average</div><svg style="left:51px;top:621px" width="18" height="18" viewBox="0 0 18 18"><path d="M4 6.5 L14 6.5 Q13.5 13.8 9 13.8 Q4.5 13.8 4 6.5Z" fill="#f0d868" stroke="#c8a030" stroke-width=".7"/><path d="M13.5 9.5 L17 12.8 L13.8 16.2 L10.4 12.8 Z" fill="#f2dc70" stroke="#b89020" stroke-width=".7"/><ellipse cx="9" cy="5.8" rx="8" ry="2.5" fill="#4aa2da" stroke="#2a78b0" stroke-width=".6"/><ellipse cx="9" cy="3.6" rx="3.6" ry="3" fill="#6ab8e8" stroke="#2a78b0" stroke-width=".6"/></svg><div class="t" style="left:73px;top:625px;font-size:12px;color:#000;letter-spacing:-0.44px">RESTAURACION ESCALERA</div><svg style="left:52px;top:640px" width="16" height="16" viewBox="0 0 16 16"><circle cx="8" cy="8" r="7.5" fill="#3a8ae0"/><path d="M3 5q3-3 5 0t-1 5-3 2zM10 4q3 0 4 3t-2 3z" fill="#f8e020"/></svg><div class="t" style="left:73px;top:643px;font-size:12px;color:#000;letter-spacing:-0.44px">539 more...</div><div class="t" style="left:52px;top:427px;font-size:12px;color:#000;letter-spacing:-0.44px">Cuentas</div><div class="t" style="left:52px;top:445px;font-size:12px;color:#000;letter-spacing:-0.44px">Indicadores</div><div class="t" style="left:52px;top:463px;font-size:12px;color:#000;letter-spacing:-0.44px">Asesores expertos</div><div class="abs" style="left:30px;top:656px;width:240px;height:8px;overflow:hidden"><div class="abs" style="left:1px;top:3px;width:14px;height:12px;border:1px solid #c8a030;border-radius:2px;background:#f2d870"></div><div class="t" style="left:22px;top:4px;font-size:12px;letter-spacing:-0.44px">Indicadores personalizados</div></div><div class="abs" style="left:3px;top:664px;width:286px;height:1px;background:#000"></div><div class="abs" style="left:6px;top:664px;width:53px;height:17px;border:2px solid #000;border-top:none;background:#fff"></div><div class="t" style="left:15px;top:666px;font-size:11px;color:#000">Común</div><div class="t" style="left:68px;top:667px;font-size:11px;color:#666">Favoritos</div><div class="abs" style="left:124px;top:667px;width:1px;height:13px;background:#666"></div><div class="abs" style="left:0px;top:686px;width:1920px;height:1px;background:#a0a0a0"></div><div class="abs" style="left:0px;top:687px;width:1920px;height:1px;background:#fff"></div><div class="abs" style="left:294px;top:97px;width:1622px;height:1px;background:#a0a0a0"></div><div class="abs" style="left:1916px;top:97px;width:1px;height:591px;background:#a0a0a0"></div><div class="abs" style="left:1917px;top:0px;width:3px;height:1200px;background:#dff4fa"></div><div class="abs" style="left:294px;top:98px;width:1621px;height:568px;background:#000"></div><div class="t" style="left:1880px;top:111px;font-size:10px;color:#fff;letter-spacing:-0.2px">1.31870</div><div class="t" style="left:1880px;top:144px;font-size:10px;color:#fff;letter-spacing:-0.2px">1.31430</div><div class="t" style="left:1880px;top:177px;font-size:10px;color:#fff;letter-spacing:-0.2px">1.30990</div><div class="t" style="left:1880px;top:210px;font-size:10px;color:#fff;letter-spacing:-0.2px">1.30550</div><div class="t" style="left:1880px;top:243px;font-size:10px;color:#fff;letter-spacing:-0.2px">1.30120</div><div class="t" style="left:1880px;top:276px;font-size:10px;color:#fff;letter-spacing:-0.2px">1.29680</div><div class="t" style="left:1880px;top:309px;font-size:10px;color:#fff;letter-spacing:-0.2px">1.29240</div><div class="t" style="left:1880px;top:342px;font-size:10px;color:#fff;letter-spacing:-0.2px">1.28810</div><div class="t" style="left:1880px;top:375px;font-size:10px;color:#fff;letter-spacing:-0.2px">1.28370</div><div class="t" style="left:1880px;top:408px;font-size:10px;color:#fff;letter-spacing:-0.2px">1.27930</div><div class="t" style="left:1880px;top:441px;font-size:10px;color:#fff;letter-spacing:-0.2px">1.27490</div><div class="t" style="left:1880px;top:474px;font-size:10px;color:#fff;letter-spacing:-0.2px">1.27060</div><div class="t" style="left:1880px;top:507px;font-size:10px;color:#fff;letter-spacing:-0.2px">1.26620</div><div class="t" style="left:1880px;top:540px;font-size:10px;color:#fff;letter-spacing:-0.2px">1.26180</div><div class="t" style="left:1880px;top:573px;font-size:10px;color:#fff;letter-spacing:-0.2px">1.25750</div><div class="t" style="left:1880px;top:606px;font-size:10px;color:#fff;letter-spacing:-0.2px">1.25310</div><div class="t" style="left:1880px;top:639px;font-size:10px;color:#fff;letter-spacing:-0.2px">1.24870</div><div class="t" style="left:297px;top:653px;font-size:10px;color:#fff;letter-spacing:-0.56px;word-spacing:2.1px">4 Sep 2012</div><div class="t" style="left:361px;top:653px;font-size:10px;color:#fff;letter-spacing:-0.56px;word-spacing:2.1px">5 Sep 08:00</div><div class="t" style="left:425px;top:653px;font-size:10px;color:#fff;letter-spacing:-0.56px;word-spacing:2.1px">6 Sep 16:00</div><div class="t" style="left:489px;top:653px;font-size:10px;color:#fff;letter-spacing:-0.56px;word-spacing:2.1px">9 Sep 23:00</div><div class="t" style="left:553px;top:653px;font-size:10px;color:#fff;letter-spacing:-0.56px;word-spacing:2.1px">11 Sep 04:00</div><div class="t" style="left:617px;top:653px;font-size:10px;color:#fff;letter-spacing:-0.56px;word-spacing:2.1px">12 Sep 12:00</div><div class="t" style="left:681px;top:653px;font-size:10px;color:#fff;letter-spacing:-0.56px;word-spacing:2.1px">13 Sep 20:00</div><div class="t" style="left:745px;top:653px;font-size:10px;color:#fff;letter-spacing:-0.56px;word-spacing:2.1px">17 Sep 04:00</div><div class="t" style="left:809px;top:653px;font-size:10px;color:#fff;letter-spacing:-0.56px;word-spacing:2.1px">18 Sep 12:00</div><div class="t" style="left:873px;top:653px;font-size:10px;color:#fff;letter-spacing:-0.56px;word-spacing:2.1px">19 Sep 20:00</div><div class="t" style="left:937px;top:653px;font-size:10px;color:#fff;letter-spacing:-0.56px;word-spacing:2.1px">21 Sep 04:00</div><div class="t" style="left:1001px;top:653px;font-size:10px;color:#fff;letter-spacing:-0.56px;word-spacing:2.1px">24 Sep 08:00</div><div class="t" style="left:1065px;top:653px;font-size:10px;color:#fff;letter-spacing:-0.56px;word-spacing:2.1px">25 Sep 16:00</div><div class="t" style="left:1129px;top:653px;font-size:10px;color:#fff;letter-spacing:-0.56px;word-spacing:2.1px">26 Sep 23:00</div><div class="t" style="left:1193px;top:653px;font-size:10px;color:#fff;letter-spacing:-0.56px;word-spacing:2.1px">28 Sep 08:00</div><div class="t" style="left:1257px;top:653px;font-size:10px;color:#fff;letter-spacing:-0.56px;word-spacing:2.1px">1 Oct 08:00</div><div class="t" style="left:1321px;top:653px;font-size:10px;color:#fff;letter-spacing:-0.56px;word-spacing:2.1px">2 Oct 16:00</div><div class="t" style="left:1385px;top:653px;font-size:10px;color:#fff;letter-spacing:-0.56px;word-spacing:2.1px">4 Oct 00:00</div><div class="t" style="left:1449px;top:653px;font-size:10px;color:#fff;letter-spacing:-0.56px;word-spacing:2.1px">5 Oct 08:00</div><div class="t" style="left:1513px;top:653px;font-size:10px;color:#fff;letter-spacing:-0.56px;word-spacing:2.1px">8 Oct 12:00</div><div class="t" style="left:1577px;top:653px;font-size:10px;color:#fff;letter-spacing:-0.56px;word-spacing:2.1px">9 Oct 20:00</div><div class="t" style="left:1641px;top:653px;font-size:10px;color:#fff;letter-spacing:-0.56px;word-spacing:2.1px">11 Oct 04:00</div><div class="t" style="left:1705px;top:653px;font-size:10px;color:#fff;letter-spacing:-0.56px;word-spacing:2.1px">12 Oct 12:00</div><div class="t" style="left:1769px;top:653px;font-size:10px;color:#fff;letter-spacing:-0.56px;word-spacing:2.1px">15 Oct 16:00</div><div class="t" style="left:1833px;top:653px;font-size:10px;color:#fff;letter-spacing:-0.56px;word-spacing:2.1px">17 Oct 00:00</div><svg style="left:0;top:0" width="1920" height="700" shape-rendering="crispEdges"><path d="M298 116.5H1874" stroke="#778899" stroke-dasharray="3 3"/><path d="M298 149.5H1874" stroke="#778899" stroke-dasharray="3 3"/><path d="M298 182.5H1874" stroke="#778899" stroke-dasharray="3 3"/><path d="M298 215.5H1874" stroke="#778899" stroke-dasharray="3 3"/><path d="M298 248.5H1874" stroke="#778899" stroke-dasharray="3 3"/><path d="M298 281.5H1874" stroke="#778899" stroke-dasharray="3 3"/><path d="M298 314.5H1874" stroke="#778899" stroke-dasharray="3 3"/><path d="M298 347.5H1874" stroke="#778899" stroke-dasharray="3 3"/><path d="M298 380.5H1874" stroke="#778899" stroke-dasharray="3 3"/><path d="M298 413.5H1874" stroke="#778899" stroke-dasharray="3 3"/><path d="M298 446.5H1874" stroke="#778899" stroke-dasharray="3 3"/><path d="M298 479.5H1874" stroke="#778899" stroke-dasharray="3 3"/><path d="M298 512.5H1874" stroke="#778899" stroke-dasharray="3 3"/><path d="M298 545.5H1874" stroke="#778899" stroke-dasharray="3 3"/><path d="M298 578.5H1874" stroke="#778899" stroke-dasharray="3 3"/><path d="M298 611.5H1874" stroke="#778899" stroke-dasharray="3 3"/><path d="M298 644.5H1874" stroke="#778899" stroke-dasharray="3 3"/><path d="M329.5 100V647" stroke="#778899" stroke-dasharray="3 3"/><path d="M361.5 100V647" stroke="#778899" stroke-dasharray="3 3"/><path d="M393.5 100V647" stroke="#778899" stroke-dasharray="3 3"/><path d="M425.5 100V647" stroke="#778899" stroke-dasharray="3 3"/><path d="M457.5 100V647" stroke="#778899" stroke-dasharray="3 3"/><path d="M489.5 100V647" stroke="#778899" stroke-dasharray="3 3"/><path d="M521.5 100V647" stroke="#778899" stroke-dasharray="3 3"/><path d="M553.5 100V647" stroke="#778899" stroke-dasharray="3 3"/><path d="M585.5 100V647" stroke="#778899" stroke-dasharray="3 3"/><path d="M617.5 100V647" stroke="#778899" stroke-dasharray="3 3"/><path d="M649.5 100V647" stroke="#778899" stroke-dasharray="3 3"/><path d="M681.5 100V647" stroke="#778899" stroke-dasharray="3 3"/><path d="M713.5 100V647" stroke="#778899" stroke-dasharray="3 3"/><path d="M745.5 100V647" stroke="#778899" stroke-dasharray="3 3"/><path d="M777.5 100V647" stroke="#778899" stroke-dasharray="3 3"/><path d="M809.5 100V647" stroke="#778899" stroke-dasharray="3 3"/><path d="M841.5 100V647" stroke="#778899" stroke-dasharray="3 3"/><path d="M873.5 100V647" stroke="#778899" stroke-dasharray="3 3"/><path d="M905.5 100V647" stroke="#778899" stroke-dasharray="3 3"/><path d="M937.5 100V647" stroke="#778899" stroke-dasharray="3 3"/><path d="M969.5 100V647" stroke="#778899" stroke-dasharray="3 3"/><path d="M1001.5 100V647" stroke="#778899" stroke-dasharray="3 3"/><path d="M1033.5 100V647" stroke="#778899" stroke-dasharray="3 3"/><path d="M1065.5 100V647" stroke="#778899" stroke-dasharray="3 3"/><path d="M1097.5 100V647" stroke="#778899" stroke-dasharray="3 3"/><path d="M1129.5 100V647" stroke="#778899" stroke-dasharray="3 3"/><path d="M1161.5 100V647" stroke="#778899" stroke-dasharray="3 3"/><path d="M1193.5 100V647" stroke="#778899" stroke-dasharray="3 3"/><path d="M1225.5 100V647" stroke="#778899" stroke-dasharray="3 3"/><path d="M1257.5 100V647" stroke="#778899" stroke-dasharray="3 3"/><path d="M1289.5 100V647" stroke="#778899" stroke-dasharray="3 3"/><path d="M1321.5 100V647" stroke="#778899" stroke-dasharray="3 3"/><path d="M1353.5 100V647" stroke="#778899" stroke-dasharray="3 3"/><path d="M1385.5 100V647" stroke="#778899" stroke-dasharray="3 3"/><path d="M1417.5 100V647" stroke="#778899" stroke-dasharray="3 3"/><path d="M1449.5 100V647" stroke="#778899" stroke-dasharray="3 3"/><path d="M1481.5 100V647" stroke="#778899" stroke-dasharray="3 3"/><path d="M1513.5 100V647" stroke="#778899" stroke-dasharray="3 3"/><path d="M1545.5 100V647" stroke="#778899" stroke-dasharray="3 3"/><path d="M1577.5 100V647" stroke="#778899" stroke-dasharray="3 3"/><path d="M1609.5 100V647" stroke="#778899" stroke-dasharray="3 3"/><path d="M1641.5 100V647" stroke="#778899" stroke-dasharray="3 3"/><path d="M1673.5 100V647" stroke="#778899" stroke-dasharray="3 3"/><path d="M1705.5 100V647" stroke="#778899" stroke-dasharray="3 3"/><path d="M1737.5 100V647" stroke="#778899" stroke-dasharray="3 3"/><path d="M1769.5 100V647" stroke="#778899" stroke-dasharray="3 3"/><path d="M1801.5 100V647" stroke="#778899" stroke-dasharray="3 3"/><path d="M1833.5 100V647" stroke="#778899" stroke-dasharray="3 3"/><path d="M1865.5 100V647" stroke="#778899" stroke-dasharray="3 3"/><path d="M489.5 101V647" stroke="#ffffff" stroke-dasharray="3 3"/><path d="M737.5 101V647" stroke="#ffffff" stroke-dasharray="3 3"/><path d="M985.5 101V647" stroke="#ffffff" stroke-dasharray="3 3"/><path d="M1233.5 101V647" stroke="#ffffff" stroke-dasharray="3 3"/><path d="M1481.5 101V647" stroke="#ffffff" stroke-dasharray="3 3"/><path d="M1729.5 101V647" stroke="#ffffff" stroke-dasharray="3 3"/><path d="M296.5 100.5H1874.5V647.5H296.5Z" stroke="#fff" fill="none"/><path d="M297 166.5H1874" stroke="#8898a8"/><path d="M1875 116.5H1878" stroke="#fff"/><path d="M1875 149.5H1878" stroke="#fff"/><path d="M1875 182.5H1878" stroke="#fff"/><path d="M1875 215.5H1878" stroke="#fff"/><path d="M1875 248.5H1878" stroke="#fff"/><path d="M1875 281.5H1878" stroke="#fff"/><path d="M1875 314.5H1878" stroke="#fff"/><path d="M1875 347.5H1878" stroke="#fff"/><path d="M1875 380.5H1878" stroke="#fff"/><path d="M1875 413.5H1878" stroke="#fff"/><path d="M1875 446.5H1878" stroke="#fff"/><path d="M1875 479.5H1878" stroke="#fff"/><path d="M1875 512.5H1878" stroke="#fff"/><path d="M1875 545.5H1878" stroke="#fff"/><path d="M1875 578.5H1878" stroke="#fff"/><path d="M1875 611.5H1878" stroke="#fff"/><path d="M1875 644.5H1878" stroke="#fff"/><path d="M297.5 648V652" stroke="#fff"/><path d="M361.5 648V652" stroke="#fff"/><path d="M425.5 648V652" stroke="#fff"/><path d="M489.5 648V652" stroke="#fff"/><path d="M553.5 648V652" stroke="#fff"/><path d="M617.5 648V652" stroke="#fff"/><path d="M681.5 648V652" stroke="#fff"/><path d="M745.5 648V652" stroke="#fff"/><path d="M809.5 648V652" stroke="#fff"/><path d="M873.5 648V652" stroke="#fff"/><path d="M937.5 648V652" stroke="#fff"/><path d="M1001.5 648V652" stroke="#fff"/><path d="M1065.5 648V652" stroke="#fff"/><path d="M1129.5 648V652" stroke="#fff"/><path d="M1193.5 648V652" stroke="#fff"/><path d="M1257.5 648V652" stroke="#fff"/><path d="M1321.5 648V652" stroke="#fff"/><path d="M1385.5 648V652" stroke="#fff"/><path d="M1449.5 648V652" stroke="#fff"/><path d="M1513.5 648V652" stroke="#fff"/><path d="M1577.5 648V652" stroke="#fff"/><path d="M1641.5 648V652" stroke="#fff"/><path d="M1705.5 648V652" stroke="#fff"/><path d="M1769.5 648V652" stroke="#fff"/><path d="M1833.5 648V652" stroke="#fff"/><path d="M298 138.5H1874" stroke="#ff0000" stroke-dasharray="9 6 3 6"/><path d="M298 183.5H1874" stroke="#ff0000" stroke-dasharray="9 6 3 6"/><path d="M298 184.5H1874" stroke="#32cd32" stroke-dasharray="9 6 3 6"/><path d="M298 229.5H1874" stroke="#ff0000" stroke-dasharray="9 6 3 6"/><path d="M298 230.5H1874" stroke="#32cd32" stroke-dasharray="9 6 3 6"/><path d="M298 275.5H1874" stroke="#32cd32" stroke-dasharray="9 6 3 6"/><path d="M298 320.5H1874" stroke="#ff0000" stroke-dasharray="9 6 3 6"/><path d="M298 365.5H1874" stroke="#32cd32" stroke-dasharray="9 6 3 6"/><path d="M298 410.5H1874" stroke="#ff0000" stroke-dasharray="9 6 3 6"/><path d="M298 411.5H1874" stroke="#32cd32" stroke-dasharray="9 6 3 6"/><path d="M298 455.5H1874" stroke="#ff0000" stroke-dasharray="9 6 3 6"/><path d="M298 456.5H1874" stroke="#32cd32" stroke-dasharray="9 6 3 6"/><path d="M298 500.5H1874" stroke="#ff0000" stroke-dasharray="9 6 3 6"/><path d="M298 501.5H1874" stroke="#32cd32" stroke-dasharray="9 6 3 6"/><path d="M298 547.5H1874" stroke="#32cd32" stroke-dasharray="9 6 3 6"/><path d="M298 592.5H1874" stroke="#ff0000" stroke-dasharray="9 6 3 6"/><path d="M394 275H1874" stroke="#32cd32" stroke-width="2" stroke-dasharray="9 6 3 6"/><path d="M394 320H1874" stroke="#ff0000" stroke-width="2" stroke-dasharray="9 6 3 6"/><path d="M394 547H1874" stroke="#32cd32" stroke-width="2" stroke-dasharray="9 6 3 6"/></svg><div class="t" style="left:301px;top:105px;font-size:10px;color:#fff;letter-spacing:-0.56px;word-spacing:2.1px">EURUSD.,H4&nbsp; 1.31121 1.31367 1.31075 1.31200</div><div class="t" style="left:301px;top:127px;font-size:10px;color:#fff;letter-spacing:-0.56px;word-spacing:2.1px">ESCALERA &gt;&gt;&gt;&gt;&nbsp; Tick :&nbsp;&nbsp; 11681</div><div class="t" style="left:301px;top:139px;font-size:10px;color:#fff;letter-spacing:-0.56px;word-spacing:2.1px">Ordenes escalera = 18</div><div class="t" style="left:307px;top:151px;font-size:10px;color:#fff;letter-spacing:-0.56px;word-spacing:2.1px">Ordenes vivas</div><div class="t" style="left:374px;top:151px;font-size:10px;color:#fff;letter-spacing:-0.56px;word-spacing:2.1px">= 18</div><div class="t" style="left:310px;top:163px;font-size:10px;color:#fff;letter-spacing:-0.56px;word-spacing:2.1px">Suma de ST</div><div class="t" style="left:374px;top:163px;font-size:10px;color:#fff;letter-spacing:-0.56px;word-spacing:2.1px">= 18</div><div class="t" style="left:303px;top:175px;font-size:10px;color:#fff;letter-spacing:-0.56px;word-spacing:2.1px">#43113588 sell</div><div class="t" style="left:301px;top:187px;font-size:10px;color:#fff;letter-spacing:-0.56px;word-spacing:2.1px">Beneficio esperado = 2000</div><div class="t" style="left:301px;top:199px;font-size:10px;color:#fff;letter-spacing:-0.56px;word-spacing:2.1px">BENEFICIO ESCALERA = -378.99</div><div class="t" style="left:303px;top:220px;font-size:10px;color:#fff;letter-spacing:-0.56px;word-spacing:2.1px;background:#000">#43464550 sell stop</div><div class="t" style="left:303px;top:265px;font-size:10px;color:#fff;letter-spacing:-0.56px;word-spacing:2.1px;background:#000">#43446340 sell stop</div><div class="t" style="left:303px;top:310px;font-size:10px;color:#fff;letter-spacing:-0.56px;word-spacing:2.1px;background:#000">#43416376 sell stop</div><div class="t" style="left:303px;top:355px;font-size:10px;color:#fff;letter-spacing:-0.56px;word-spacing:2.1px;background:#000">#43377572 sell stop</div><div class="t" style="left:303px;top:401px;font-size:10px;color:#fff;letter-spacing:-0.56px;word-spacing:2.1px;background:#000">#43113577 sell stopt</div><div class="t" style="left:303px;top:446px;font-size:10px;color:#fff;letter-spacing:-0.56px;word-spacing:2.1px;background:#000">#43113582 sell stopt</div><div class="t" style="left:303px;top:492px;font-size:10px;color:#fff;letter-spacing:-0.56px;word-spacing:2.1px;background:#000">#43113586 sell stopt</div><div class="t" style="left:303px;top:537px;font-size:10px;color:#fff;letter-spacing:-0.56px;word-spacing:2.1px;background:#000">#43113590 sell stopt</div><svg style="left:0;top:0" width="1920" height="700" shape-rendering="crispEdges"><defs><clipPath id="cclip"><rect x="297" y="101" width="1577" height="546"/></clipPath></defs><g clip-path="url(#cclip)"><rect x="297" y="547" width="1" height="28" fill="#00ff00"/><rect x="295" y="550" width="5" height="21" fill="#00ff00"/><rect x="296" y="551" width="3" height="19" fill="#000000"/><rect x="305" y="540" width="1" height="15" fill="#00ff00"/><rect x="303" y="550" width="5" height="1" fill="#00ff00"/><rect x="313" y="545" width="1" height="17" fill="#00ff00"/><rect x="311" y="549" width="5" height="7" fill="#00ff00"/><rect x="312" y="550" width="3" height="5" fill="#ffffff"/><rect x="321" y="550" width="1" height="43" fill="#00ff00"/><rect x="319" y="555" width="5" height="24" fill="#00ff00"/><rect x="320" y="556" width="3" height="22" fill="#ffffff"/><rect x="329" y="561" width="1" height="34" fill="#00ff00"/><rect x="327" y="579" width="5" height="10" fill="#00ff00"/><rect x="328" y="580" width="3" height="8" fill="#ffffff"/><rect x="337" y="575" width="1" height="16" fill="#00ff00"/><rect x="335" y="584" width="5" height="5" fill="#00ff00"/><rect x="336" y="585" width="3" height="3" fill="#000000"/><rect x="345" y="583" width="1" height="35" fill="#00ff00"/><rect x="343" y="584" width="5" height="22" fill="#00ff00"/><rect x="344" y="585" width="3" height="20" fill="#ffffff"/><rect x="353" y="603" width="1" height="13" fill="#00ff00"/><rect x="351" y="605" width="5" height="3" fill="#00ff00"/><rect x="352" y="606" width="3" height="1" fill="#000000"/><rect x="361" y="597" width="1" height="39" fill="#00ff00"/><rect x="359" y="599" width="5" height="9" fill="#00ff00"/><rect x="360" y="600" width="3" height="7" fill="#000000"/><rect x="369" y="550" width="1" height="61" fill="#00ff00"/><rect x="367" y="560" width="5" height="40" fill="#00ff00"/><rect x="368" y="561" width="3" height="38" fill="#000000"/><rect x="377" y="541" width="1" height="31" fill="#00ff00"/><rect x="375" y="560" width="5" height="1" fill="#00ff00"/><rect x="385" y="555" width="1" height="12" fill="#00ff00"/><rect x="383" y="557" width="5" height="4" fill="#00ff00"/><rect x="384" y="558" width="3" height="2" fill="#000000"/><rect x="393" y="549" width="1" height="16" fill="#00ff00"/><rect x="391" y="552" width="5" height="6" fill="#00ff00"/><rect x="392" y="553" width="3" height="4" fill="#000000"/><rect x="401" y="544" width="1" height="19" fill="#00ff00"/><rect x="399" y="550" width="5" height="1" fill="#00ff00"/><rect x="409" y="533" width="1" height="27" fill="#00ff00"/><rect x="407" y="550" width="5" height="1" fill="#00ff00"/><rect x="417" y="522" width="1" height="68" fill="#00ff00"/><rect x="415" y="550" width="5" height="26" fill="#00ff00"/><rect x="416" y="551" width="3" height="24" fill="#ffffff"/><rect x="425" y="526" width="1" height="51" fill="#00ff00"/><rect x="423" y="531" width="5" height="45" fill="#00ff00"/><rect x="424" y="532" width="3" height="43" fill="#000000"/><rect x="433" y="524" width="1" height="15" fill="#00ff00"/><rect x="431" y="532" width="5" height="4" fill="#00ff00"/><rect x="432" y="533" width="3" height="2" fill="#ffffff"/><rect x="441" y="528" width="1" height="13" fill="#00ff00"/><rect x="439" y="534" width="5" height="4" fill="#00ff00"/><rect x="440" y="535" width="3" height="2" fill="#ffffff"/><rect x="449" y="528" width="1" height="13" fill="#00ff00"/><rect x="447" y="532" width="5" height="7" fill="#00ff00"/><rect x="448" y="533" width="3" height="5" fill="#000000"/><rect x="457" y="494" width="1" height="42" fill="#00ff00"/><rect x="455" y="498" width="5" height="35" fill="#00ff00"/><rect x="456" y="499" width="3" height="33" fill="#000000"/><rect x="465" y="426" width="1" height="75" fill="#00ff00"/><rect x="463" y="442" width="5" height="57" fill="#00ff00"/><rect x="464" y="443" width="3" height="55" fill="#000000"/><rect x="473" y="404" width="1" height="42" fill="#00ff00"/><rect x="471" y="414" width="5" height="29" fill="#00ff00"/><rect x="472" y="415" width="3" height="27" fill="#000000"/><rect x="481" y="402" width="1" height="17" fill="#00ff00"/><rect x="479" y="406" width="5" height="9" fill="#00ff00"/><rect x="480" y="407" width="3" height="7" fill="#000000"/><rect x="489" y="400" width="1" height="7" fill="#00ff00"/><rect x="487" y="404" width="5" height="1" fill="#00ff00"/><rect x="497" y="402" width="1" height="20" fill="#00ff00"/><rect x="495" y="403" width="5" height="15" fill="#00ff00"/><rect x="496" y="404" width="3" height="13" fill="#ffffff"/><rect x="505" y="411" width="1" height="13" fill="#00ff00"/><rect x="503" y="416" width="5" height="4" fill="#00ff00"/><rect x="504" y="417" width="3" height="2" fill="#ffffff"/><rect x="513" y="405" width="1" height="27" fill="#00ff00"/><rect x="511" y="419" width="5" height="6" fill="#00ff00"/><rect x="512" y="420" width="3" height="4" fill="#ffffff"/><rect x="521" y="412" width="1" height="20" fill="#00ff00"/><rect x="519" y="423" width="5" height="1" fill="#00ff00"/><rect x="529" y="405" width="1" height="24" fill="#00ff00"/><rect x="527" y="423" width="5" height="1" fill="#00ff00"/><rect x="537" y="419" width="1" height="26" fill="#00ff00"/><rect x="535" y="423" width="5" height="18" fill="#00ff00"/><rect x="536" y="424" width="3" height="16" fill="#ffffff"/><rect x="545" y="430" width="1" height="13" fill="#00ff00"/><rect x="543" y="431" width="5" height="10" fill="#00ff00"/><rect x="544" y="432" width="3" height="8" fill="#000000"/><rect x="553" y="412" width="1" height="29" fill="#00ff00"/><rect x="551" y="431" width="5" height="3" fill="#00ff00"/><rect x="552" y="432" width="3" height="1" fill="#000000"/><rect x="561" y="394" width="1" height="46" fill="#00ff00"/><rect x="559" y="410" width="5" height="25" fill="#00ff00"/><rect x="560" y="411" width="3" height="23" fill="#000000"/><rect x="569" y="377" width="1" height="57" fill="#00ff00"/><rect x="567" y="381" width="5" height="30" fill="#00ff00"/><rect x="568" y="382" width="3" height="28" fill="#000000"/><rect x="577" y="354" width="1" height="38" fill="#00ff00"/><rect x="575" y="363" width="5" height="20" fill="#00ff00"/><rect x="576" y="364" width="3" height="18" fill="#000000"/><rect x="585" y="357" width="1" height="20" fill="#00ff00"/><rect x="583" y="364" width="5" height="6" fill="#00ff00"/><rect x="584" y="365" width="3" height="4" fill="#ffffff"/><rect x="593" y="364" width="1" height="11" fill="#00ff00"/><rect x="591" y="368" width="5" height="1" fill="#00ff00"/><rect x="601" y="346" width="1" height="24" fill="#00ff00"/><rect x="599" y="358" width="5" height="12" fill="#00ff00"/><rect x="600" y="359" width="3" height="10" fill="#000000"/><rect x="609" y="310" width="1" height="89" fill="#00ff00"/><rect x="607" y="313" width="5" height="46" fill="#00ff00"/><rect x="608" y="314" width="3" height="44" fill="#000000"/><rect x="617" y="304" width="1" height="41" fill="#00ff00"/><rect x="615" y="313" width="5" height="25" fill="#00ff00"/><rect x="616" y="314" width="3" height="23" fill="#ffffff"/><rect x="625" y="327" width="1" height="26" fill="#00ff00"/><rect x="623" y="335" width="5" height="3" fill="#00ff00"/><rect x="624" y="336" width="3" height="1" fill="#000000"/><rect x="633" y="329" width="1" height="13" fill="#00ff00"/><rect x="631" y="333" width="5" height="3" fill="#00ff00"/><rect x="632" y="334" width="3" height="1" fill="#000000"/><rect x="641" y="319" width="1" height="19" fill="#00ff00"/><rect x="639" y="320" width="5" height="15" fill="#00ff00"/><rect x="640" y="321" width="3" height="13" fill="#000000"/><rect x="649" y="310" width="1" height="15" fill="#00ff00"/><rect x="647" y="315" width="5" height="6" fill="#00ff00"/><rect x="648" y="316" width="3" height="4" fill="#000000"/><rect x="657" y="309" width="1" height="23" fill="#00ff00"/><rect x="655" y="314" width="5" height="16" fill="#00ff00"/><rect x="656" y="315" width="3" height="14" fill="#ffffff"/><rect x="665" y="321" width="1" height="26" fill="#00ff00"/><rect x="663" y="329" width="5" height="5" fill="#00ff00"/><rect x="664" y="330" width="3" height="3" fill="#ffffff"/><rect x="673" y="282" width="1" height="88" fill="#00ff00"/><rect x="671" y="287" width="5" height="48" fill="#00ff00"/><rect x="672" y="288" width="3" height="46" fill="#000000"/><rect x="681" y="256" width="1" height="35" fill="#00ff00"/><rect x="679" y="268" width="5" height="19" fill="#00ff00"/><rect x="680" y="269" width="3" height="17" fill="#000000"/><rect x="689" y="246" width="1" height="28" fill="#00ff00"/><rect x="687" y="255" width="5" height="13" fill="#00ff00"/><rect x="688" y="256" width="3" height="11" fill="#000000"/><rect x="697" y="227" width="1" height="31" fill="#00ff00"/><rect x="695" y="229" width="5" height="28" fill="#00ff00"/><rect x="696" y="230" width="3" height="26" fill="#000000"/><rect x="705" y="206" width="1" height="37" fill="#00ff00"/><rect x="703" y="210" width="5" height="21" fill="#00ff00"/><rect x="704" y="211" width="3" height="19" fill="#000000"/><rect x="713" y="143" width="1" height="73" fill="#00ff00"/><rect x="711" y="148" width="5" height="64" fill="#00ff00"/><rect x="712" y="149" width="3" height="62" fill="#000000"/><rect x="721" y="130" width="1" height="55" fill="#00ff00"/><rect x="719" y="148" width="5" height="25" fill="#00ff00"/><rect x="720" y="149" width="3" height="23" fill="#ffffff"/><rect x="729" y="164" width="1" height="17" fill="#00ff00"/><rect x="727" y="167" width="5" height="8" fill="#00ff00"/><rect x="728" y="168" width="3" height="6" fill="#000000"/><rect x="737" y="157" width="1" height="13" fill="#00ff00"/><rect x="735" y="163" width="5" height="5" fill="#00ff00"/><rect x="736" y="164" width="3" height="3" fill="#000000"/><rect x="745" y="159" width="1" height="21" fill="#00ff00"/><rect x="743" y="161" width="5" height="5" fill="#00ff00"/><rect x="744" y="162" width="3" height="3" fill="#000000"/><rect x="753" y="151" width="1" height="16" fill="#00ff00"/><rect x="751" y="159" width="5" height="4" fill="#00ff00"/><rect x="752" y="160" width="3" height="2" fill="#000000"/><rect x="761" y="154" width="1" height="36" fill="#00ff00"/><rect x="759" y="159" width="5" height="17" fill="#00ff00"/><rect x="760" y="160" width="3" height="15" fill="#ffffff"/><rect x="769" y="127" width="1" height="68" fill="#00ff00"/><rect x="767" y="145" width="5" height="32" fill="#00ff00"/><rect x="768" y="146" width="3" height="30" fill="#000000"/><rect x="777" y="139" width="1" height="44" fill="#00ff00"/><rect x="775" y="146" width="5" height="32" fill="#00ff00"/><rect x="776" y="147" width="3" height="30" fill="#ffffff"/><rect x="785" y="167" width="1" height="23" fill="#00ff00"/><rect x="783" y="171" width="5" height="8" fill="#00ff00"/><rect x="784" y="172" width="3" height="6" fill="#000000"/><rect x="793" y="167" width="1" height="24" fill="#00ff00"/><rect x="791" y="171" width="5" height="8" fill="#00ff00"/><rect x="792" y="172" width="3" height="6" fill="#ffffff"/><rect x="801" y="171" width="1" height="19" fill="#00ff00"/><rect x="799" y="177" width="5" height="12" fill="#00ff00"/><rect x="800" y="178" width="3" height="10" fill="#ffffff"/><rect x="809" y="171" width="1" height="48" fill="#00ff00"/><rect x="807" y="188" width="5" height="25" fill="#00ff00"/><rect x="808" y="189" width="3" height="23" fill="#ffffff"/><rect x="817" y="201" width="1" height="30" fill="#00ff00"/><rect x="815" y="212" width="5" height="1" fill="#00ff00"/><rect x="825" y="203" width="1" height="32" fill="#00ff00"/><rect x="823" y="211" width="5" height="20" fill="#00ff00"/><rect x="824" y="212" width="3" height="18" fill="#ffffff"/><rect x="833" y="221" width="1" height="16" fill="#00ff00"/><rect x="831" y="224" width="5" height="7" fill="#00ff00"/><rect x="832" y="225" width="3" height="5" fill="#000000"/><rect x="841" y="220" width="1" height="14" fill="#00ff00"/><rect x="839" y="224" width="5" height="5" fill="#00ff00"/><rect x="840" y="225" width="3" height="3" fill="#ffffff"/><rect x="849" y="193" width="1" height="38" fill="#00ff00"/><rect x="847" y="196" width="5" height="33" fill="#00ff00"/><rect x="848" y="197" width="3" height="31" fill="#000000"/><rect x="857" y="195" width="1" height="57" fill="#00ff00"/><rect x="855" y="195" width="5" height="54" fill="#00ff00"/><rect x="856" y="196" width="3" height="52" fill="#ffffff"/><rect x="865" y="232" width="1" height="33" fill="#00ff00"/><rect x="863" y="241" width="5" height="8" fill="#00ff00"/><rect x="864" y="242" width="3" height="6" fill="#000000"/><rect x="873" y="200" width="1" height="43" fill="#00ff00"/><rect x="871" y="219" width="5" height="23" fill="#00ff00"/><rect x="872" y="220" width="3" height="21" fill="#000000"/><rect x="881" y="209" width="1" height="17" fill="#00ff00"/><rect x="879" y="219" width="5" height="4" fill="#00ff00"/><rect x="880" y="220" width="3" height="2" fill="#ffffff"/><rect x="889" y="213" width="1" height="23" fill="#00ff00"/><rect x="887" y="222" width="5" height="13" fill="#00ff00"/><rect x="888" y="223" width="3" height="11" fill="#ffffff"/><rect x="897" y="229" width="1" height="44" fill="#00ff00"/><rect x="895" y="234" width="5" height="35" fill="#00ff00"/><rect x="896" y="235" width="3" height="33" fill="#ffffff"/><rect x="905" y="264" width="1" height="49" fill="#00ff00"/><rect x="903" y="269" width="5" height="32" fill="#00ff00"/><rect x="904" y="270" width="3" height="30" fill="#ffffff"/><rect x="913" y="286" width="1" height="34" fill="#00ff00"/><rect x="911" y="301" width="5" height="12" fill="#00ff00"/><rect x="912" y="302" width="3" height="10" fill="#ffffff"/><rect x="921" y="288" width="1" height="27" fill="#00ff00"/><rect x="919" y="295" width="5" height="19" fill="#00ff00"/><rect x="920" y="296" width="3" height="17" fill="#000000"/><rect x="929" y="277" width="1" height="21" fill="#00ff00"/><rect x="927" y="283" width="5" height="14" fill="#00ff00"/><rect x="928" y="284" width="3" height="12" fill="#000000"/><rect x="937" y="273" width="1" height="16" fill="#00ff00"/><rect x="935" y="280" width="5" height="5" fill="#00ff00"/><rect x="936" y="281" width="3" height="3" fill="#000000"/><rect x="945" y="257" width="1" height="27" fill="#00ff00"/><rect x="943" y="266" width="5" height="16" fill="#00ff00"/><rect x="944" y="267" width="3" height="14" fill="#000000"/><rect x="953" y="221" width="1" height="72" fill="#00ff00"/><rect x="951" y="237" width="5" height="30" fill="#00ff00"/><rect x="952" y="238" width="3" height="28" fill="#000000"/><rect x="961" y="224" width="1" height="61" fill="#00ff00"/><rect x="959" y="237" width="5" height="7" fill="#00ff00"/><rect x="960" y="238" width="3" height="5" fill="#ffffff"/><rect x="969" y="242" width="1" height="32" fill="#00ff00"/><rect x="967" y="243" width="5" height="16" fill="#00ff00"/><rect x="968" y="244" width="3" height="14" fill="#ffffff"/><rect x="977" y="256" width="1" height="16" fill="#00ff00"/><rect x="975" y="257" width="5" height="14" fill="#00ff00"/><rect x="976" y="258" width="3" height="12" fill="#ffffff"/><rect x="985" y="265" width="1" height="14" fill="#00ff00"/><rect x="983" y="273" width="5" height="5" fill="#00ff00"/><rect x="984" y="274" width="3" height="3" fill="#000000"/><rect x="993" y="272" width="1" height="40" fill="#00ff00"/><rect x="991" y="272" width="5" height="35" fill="#00ff00"/><rect x="992" y="273" width="3" height="33" fill="#ffffff"/><rect x="1001" y="292" width="1" height="22" fill="#00ff00"/><rect x="999" y="298" width="5" height="9" fill="#00ff00"/><rect x="1000" y="299" width="3" height="7" fill="#000000"/><rect x="1009" y="278" width="1" height="59" fill="#00ff00"/><rect x="1007" y="298" width="5" height="27" fill="#00ff00"/><rect x="1008" y="299" width="3" height="25" fill="#ffffff"/><rect x="1017" y="306" width="1" height="36" fill="#00ff00"/><rect x="1015" y="324" width="5" height="1" fill="#00ff00"/><rect x="1025" y="311" width="1" height="26" fill="#00ff00"/><rect x="1023" y="318" width="5" height="7" fill="#00ff00"/><rect x="1024" y="319" width="3" height="5" fill="#000000"/><rect x="1033" y="305" width="1" height="15" fill="#00ff00"/><rect x="1031" y="309" width="5" height="11" fill="#00ff00"/><rect x="1032" y="310" width="3" height="9" fill="#000000"/><rect x="1041" y="299" width="1" height="14" fill="#00ff00"/><rect x="1039" y="303" width="5" height="8" fill="#00ff00"/><rect x="1040" y="304" width="3" height="6" fill="#000000"/><rect x="1049" y="293" width="1" height="45" fill="#00ff00"/><rect x="1047" y="303" width="5" height="32" fill="#00ff00"/><rect x="1048" y="304" width="3" height="30" fill="#ffffff"/><rect x="1057" y="313" width="1" height="32" fill="#00ff00"/><rect x="1055" y="333" width="5" height="3" fill="#00ff00"/><rect x="1056" y="334" width="3" height="1" fill="#000000"/><rect x="1065" y="281" width="1" height="60" fill="#00ff00"/><rect x="1063" y="300" width="5" height="36" fill="#00ff00"/><rect x="1064" y="301" width="3" height="34" fill="#000000"/><rect x="1073" y="279" width="1" height="24" fill="#00ff00"/><rect x="1071" y="297" width="5" height="4" fill="#00ff00"/><rect x="1072" y="298" width="3" height="2" fill="#ffffff"/><rect x="1081" y="296" width="1" height="41" fill="#00ff00"/><rect x="1079" y="297" width="5" height="33" fill="#00ff00"/><rect x="1080" y="298" width="3" height="31" fill="#ffffff"/><rect x="1089" y="323" width="1" height="15" fill="#00ff00"/><rect x="1087" y="328" width="5" height="3" fill="#00ff00"/><rect x="1088" y="329" width="3" height="1" fill="#000000"/><rect x="1097" y="325" width="1" height="36" fill="#00ff00"/><rect x="1095" y="328" width="5" height="30" fill="#00ff00"/><rect x="1096" y="329" width="3" height="28" fill="#ffffff"/><rect x="1105" y="341" width="1" height="34" fill="#00ff00"/><rect x="1103" y="358" width="5" height="1" fill="#00ff00"/><rect x="1113" y="354" width="1" height="27" fill="#00ff00"/><rect x="1111" y="359" width="5" height="13" fill="#00ff00"/><rect x="1112" y="360" width="3" height="11" fill="#ffffff"/><rect x="1121" y="358" width="1" height="25" fill="#00ff00"/><rect x="1119" y="366" width="5" height="6" fill="#00ff00"/><rect x="1120" y="367" width="3" height="4" fill="#000000"/><rect x="1129" y="352" width="1" height="19" fill="#00ff00"/><rect x="1127" y="353" width="5" height="14" fill="#00ff00"/><rect x="1128" y="354" width="3" height="12" fill="#000000"/><rect x="1137" y="342" width="1" height="18" fill="#00ff00"/><rect x="1135" y="344" width="5" height="11" fill="#00ff00"/><rect x="1136" y="345" width="3" height="9" fill="#000000"/><rect x="1145" y="335" width="1" height="20" fill="#00ff00"/><rect x="1143" y="339" width="5" height="6" fill="#00ff00"/><rect x="1144" y="340" width="3" height="4" fill="#000000"/><rect x="1153" y="333" width="1" height="43" fill="#00ff00"/><rect x="1151" y="339" width="5" height="30" fill="#00ff00"/><rect x="1152" y="340" width="3" height="28" fill="#ffffff"/><rect x="1161" y="339" width="1" height="37" fill="#00ff00"/><rect x="1159" y="352" width="5" height="17" fill="#00ff00"/><rect x="1160" y="353" width="3" height="15" fill="#000000"/><rect x="1169" y="315" width="1" height="73" fill="#00ff00"/><rect x="1167" y="321" width="5" height="32" fill="#00ff00"/><rect x="1168" y="322" width="3" height="30" fill="#000000"/><rect x="1177" y="312" width="1" height="15" fill="#00ff00"/><rect x="1175" y="321" width="5" height="1" fill="#00ff00"/><rect x="1185" y="315" width="1" height="14" fill="#00ff00"/><rect x="1183" y="318" width="5" height="6" fill="#00ff00"/><rect x="1184" y="319" width="3" height="4" fill="#000000"/><rect x="1193" y="301" width="1" height="20" fill="#00ff00"/><rect x="1191" y="311" width="5" height="9" fill="#00ff00"/><rect x="1192" y="312" width="3" height="7" fill="#000000"/><rect x="1201" y="287" width="1" height="31" fill="#00ff00"/><rect x="1199" y="302" width="5" height="10" fill="#00ff00"/><rect x="1200" y="303" width="3" height="8" fill="#000000"/><rect x="1209" y="296" width="1" height="45" fill="#00ff00"/><rect x="1207" y="302" width="5" height="35" fill="#00ff00"/><rect x="1208" y="303" width="3" height="33" fill="#ffffff"/><rect x="1217" y="332" width="1" height="49" fill="#00ff00"/><rect x="1215" y="337" width="5" height="25" fill="#00ff00"/><rect x="1216" y="338" width="3" height="23" fill="#ffffff"/><rect x="1225" y="358" width="1" height="21" fill="#00ff00"/><rect x="1223" y="361" width="5" height="9" fill="#00ff00"/><rect x="1224" y="362" width="3" height="7" fill="#ffffff"/><rect x="1233" y="368" width="1" height="12" fill="#00ff00"/><rect x="1231" y="372" width="5" height="5" fill="#00ff00"/><rect x="1232" y="373" width="3" height="3" fill="#000000"/><rect x="1241" y="370" width="1" height="38" fill="#00ff00"/><rect x="1239" y="372" width="5" height="27" fill="#00ff00"/><rect x="1240" y="373" width="3" height="25" fill="#ffffff"/><rect x="1249" y="385" width="1" height="21" fill="#00ff00"/><rect x="1247" y="386" width="5" height="12" fill="#00ff00"/><rect x="1248" y="387" width="3" height="10" fill="#000000"/><rect x="1257" y="324" width="1" height="67" fill="#00ff00"/><rect x="1255" y="334" width="5" height="54" fill="#00ff00"/><rect x="1256" y="335" width="3" height="52" fill="#000000"/><rect x="1265" y="312" width="1" height="41" fill="#00ff00"/><rect x="1263" y="326" width="5" height="9" fill="#00ff00"/><rect x="1264" y="327" width="3" height="7" fill="#000000"/><rect x="1273" y="304" width="1" height="43" fill="#00ff00"/><rect x="1271" y="326" width="5" height="10" fill="#00ff00"/><rect x="1272" y="327" width="3" height="8" fill="#ffffff"/><rect x="1281" y="335" width="1" height="17" fill="#00ff00"/><rect x="1279" y="336" width="5" height="7" fill="#00ff00"/><rect x="1280" y="337" width="3" height="5" fill="#ffffff"/><rect x="1289" y="331" width="1" height="17" fill="#00ff00"/><rect x="1287" y="334" width="5" height="10" fill="#00ff00"/><rect x="1288" y="335" width="3" height="8" fill="#000000"/><rect x="1297" y="319" width="1" height="28" fill="#00ff00"/><rect x="1295" y="323" width="5" height="11" fill="#00ff00"/><rect x="1296" y="324" width="3" height="9" fill="#000000"/><rect x="1305" y="315" width="1" height="35" fill="#00ff00"/><rect x="1303" y="324" width="5" height="1" fill="#00ff00"/><rect x="1313" y="296" width="1" height="33" fill="#00ff00"/><rect x="1311" y="306" width="5" height="19" fill="#00ff00"/><rect x="1312" y="307" width="3" height="17" fill="#000000"/><rect x="1321" y="281" width="1" height="38" fill="#00ff00"/><rect x="1319" y="306" width="5" height="6" fill="#00ff00"/><rect x="1320" y="307" width="3" height="4" fill="#ffffff"/><rect x="1329" y="308" width="1" height="17" fill="#00ff00"/><rect x="1327" y="311" width="5" height="10" fill="#00ff00"/><rect x="1328" y="312" width="3" height="8" fill="#ffffff"/><rect x="1337" y="318" width="1" height="15" fill="#00ff00"/><rect x="1335" y="320" width="5" height="6" fill="#00ff00"/><rect x="1336" y="321" width="3" height="4" fill="#ffffff"/><rect x="1345" y="322" width="1" height="18" fill="#00ff00"/><rect x="1343" y="325" width="5" height="10" fill="#00ff00"/><rect x="1344" y="326" width="3" height="8" fill="#ffffff"/><rect x="1353" y="304" width="1" height="48" fill="#00ff00"/><rect x="1351" y="314" width="5" height="21" fill="#00ff00"/><rect x="1352" y="315" width="3" height="19" fill="#000000"/><rect x="1361" y="310" width="1" height="34" fill="#00ff00"/><rect x="1359" y="314" width="5" height="20" fill="#00ff00"/><rect x="1360" y="315" width="3" height="18" fill="#ffffff"/><rect x="1369" y="314" width="1" height="30" fill="#00ff00"/><rect x="1367" y="331" width="5" height="4" fill="#00ff00"/><rect x="1368" y="332" width="3" height="2" fill="#000000"/><rect x="1377" y="325" width="1" height="11" fill="#00ff00"/><rect x="1375" y="326" width="5" height="5" fill="#00ff00"/><rect x="1376" y="327" width="3" height="3" fill="#000000"/><rect x="1385" y="315" width="1" height="13" fill="#00ff00"/><rect x="1383" y="324" width="5" height="4" fill="#00ff00"/><rect x="1384" y="325" width="3" height="2" fill="#000000"/><rect x="1393" y="308" width="1" height="18" fill="#00ff00"/><rect x="1391" y="315" width="5" height="10" fill="#00ff00"/><rect x="1392" y="316" width="3" height="8" fill="#000000"/><rect x="1401" y="289" width="1" height="31" fill="#00ff00"/><rect x="1399" y="299" width="5" height="18" fill="#00ff00"/><rect x="1400" y="300" width="3" height="16" fill="#000000"/><rect x="1409" y="260" width="1" height="47" fill="#00ff00"/><rect x="1407" y="276" width="5" height="24" fill="#00ff00"/><rect x="1408" y="277" width="3" height="22" fill="#000000"/><rect x="1417" y="232" width="1" height="48" fill="#00ff00"/><rect x="1415" y="235" width="5" height="44" fill="#00ff00"/><rect x="1416" y="236" width="3" height="42" fill="#000000"/><rect x="1425" y="235" width="1" height="18" fill="#00ff00"/><rect x="1423" y="237" width="5" height="8" fill="#00ff00"/><rect x="1424" y="238" width="3" height="6" fill="#ffffff"/><rect x="1433" y="241" width="1" height="9" fill="#00ff00"/><rect x="1431" y="243" width="5" height="4" fill="#00ff00"/><rect x="1432" y="244" width="3" height="2" fill="#000000"/><rect x="1441" y="241" width="1" height="13" fill="#00ff00"/><rect x="1439" y="243" width="5" height="10" fill="#00ff00"/><rect x="1440" y="244" width="3" height="8" fill="#ffffff"/><rect x="1449" y="246" width="1" height="18" fill="#00ff00"/><rect x="1447" y="252" width="5" height="1" fill="#00ff00"/><rect x="1457" y="209" width="1" height="54" fill="#00ff00"/><rect x="1455" y="214" width="5" height="39" fill="#00ff00"/><rect x="1456" y="215" width="3" height="37" fill="#000000"/><rect x="1465" y="203" width="1" height="37" fill="#00ff00"/><rect x="1463" y="215" width="5" height="21" fill="#00ff00"/><rect x="1464" y="216" width="3" height="19" fill="#ffffff"/><rect x="1473" y="229" width="1" height="19" fill="#00ff00"/><rect x="1471" y="234" width="5" height="3" fill="#00ff00"/><rect x="1472" y="235" width="3" height="1" fill="#ffffff"/><rect x="1481" y="237" width="1" height="8" fill="#00ff00"/><rect x="1479" y="240" width="5" height="1" fill="#00ff00"/><rect x="1489" y="239" width="1" height="16" fill="#00ff00"/><rect x="1487" y="240" width="5" height="9" fill="#00ff00"/><rect x="1488" y="241" width="3" height="7" fill="#ffffff"/><rect x="1497" y="248" width="1" height="26" fill="#00ff00"/><rect x="1495" y="248" width="5" height="23" fill="#00ff00"/><rect x="1496" y="249" width="3" height="21" fill="#ffffff"/><rect x="1505" y="263" width="1" height="29" fill="#00ff00"/><rect x="1503" y="270" width="5" height="17" fill="#00ff00"/><rect x="1504" y="271" width="3" height="15" fill="#ffffff"/><rect x="1513" y="275" width="1" height="32" fill="#00ff00"/><rect x="1511" y="277" width="5" height="10" fill="#00ff00"/><rect x="1512" y="278" width="3" height="8" fill="#000000"/><rect x="1521" y="277" width="1" height="13" fill="#00ff00"/><rect x="1519" y="277" width="5" height="3" fill="#00ff00"/><rect x="1520" y="278" width="3" height="1" fill="#ffffff"/><rect x="1529" y="276" width="1" height="10" fill="#00ff00"/><rect x="1527" y="280" width="5" height="3" fill="#00ff00"/><rect x="1528" y="281" width="3" height="1" fill="#ffffff"/><rect x="1537" y="267" width="1" height="18" fill="#00ff00"/><rect x="1535" y="274" width="5" height="9" fill="#00ff00"/><rect x="1536" y="275" width="3" height="7" fill="#000000"/><rect x="1545" y="263" width="1" height="14" fill="#00ff00"/><rect x="1543" y="267" width="5" height="9" fill="#00ff00"/><rect x="1544" y="268" width="3" height="7" fill="#000000"/><rect x="1553" y="264" width="1" height="66" fill="#00ff00"/><rect x="1551" y="267" width="5" height="40" fill="#00ff00"/><rect x="1552" y="268" width="3" height="38" fill="#ffffff"/><rect x="1561" y="287" width="1" height="46" fill="#00ff00"/><rect x="1559" y="306" width="5" height="13" fill="#00ff00"/><rect x="1560" y="307" width="3" height="11" fill="#ffffff"/><rect x="1569" y="312" width="1" height="53" fill="#00ff00"/><rect x="1567" y="318" width="5" height="43" fill="#00ff00"/><rect x="1568" y="319" width="3" height="41" fill="#ffffff"/><rect x="1577" y="344" width="1" height="19" fill="#00ff00"/><rect x="1575" y="345" width="5" height="16" fill="#00ff00"/><rect x="1576" y="346" width="3" height="14" fill="#000000"/><rect x="1585" y="345" width="1" height="27" fill="#00ff00"/><rect x="1583" y="345" width="5" height="12" fill="#00ff00"/><rect x="1584" y="346" width="3" height="10" fill="#ffffff"/><rect x="1593" y="356" width="1" height="27" fill="#00ff00"/><rect x="1591" y="356" width="5" height="9" fill="#00ff00"/><rect x="1592" y="357" width="3" height="7" fill="#ffffff"/><rect x="1601" y="349" width="1" height="27" fill="#00ff00"/><rect x="1599" y="364" width="5" height="5" fill="#00ff00"/><rect x="1600" y="365" width="3" height="3" fill="#ffffff"/><rect x="1609" y="334" width="1" height="35" fill="#00ff00"/><rect x="1607" y="346" width="5" height="23" fill="#00ff00"/><rect x="1608" y="347" width="3" height="21" fill="#000000"/><rect x="1617" y="323" width="1" height="28" fill="#00ff00"/><rect x="1615" y="336" width="5" height="11" fill="#00ff00"/><rect x="1616" y="337" width="3" height="9" fill="#000000"/><rect x="1625" y="324" width="1" height="50" fill="#00ff00"/><rect x="1623" y="336" width="5" height="35" fill="#00ff00"/><rect x="1624" y="337" width="3" height="33" fill="#ffffff"/><rect x="1633" y="363" width="1" height="28" fill="#00ff00"/><rect x="1631" y="368" width="5" height="14" fill="#00ff00"/><rect x="1632" y="369" width="3" height="12" fill="#ffffff"/><rect x="1641" y="350" width="1" height="35" fill="#00ff00"/><rect x="1639" y="364" width="5" height="18" fill="#00ff00"/><rect x="1640" y="365" width="3" height="16" fill="#000000"/><rect x="1649" y="339" width="1" height="38" fill="#00ff00"/><rect x="1647" y="345" width="5" height="21" fill="#00ff00"/><rect x="1648" y="346" width="3" height="19" fill="#000000"/><rect x="1657" y="299" width="1" height="50" fill="#00ff00"/><rect x="1655" y="303" width="5" height="44" fill="#00ff00"/><rect x="1656" y="304" width="3" height="42" fill="#000000"/><rect x="1665" y="294" width="1" height="21" fill="#00ff00"/><rect x="1663" y="303" width="5" height="8" fill="#00ff00"/><rect x="1664" y="304" width="3" height="6" fill="#ffffff"/><rect x="1673" y="305" width="1" height="15" fill="#00ff00"/><rect x="1671" y="309" width="5" height="1" fill="#00ff00"/><rect x="1681" y="298" width="1" height="17" fill="#00ff00"/><rect x="1679" y="303" width="5" height="8" fill="#00ff00"/><rect x="1680" y="304" width="3" height="6" fill="#000000"/><rect x="1689" y="299" width="1" height="19" fill="#00ff00"/><rect x="1687" y="303" width="5" height="8" fill="#00ff00"/><rect x="1688" y="304" width="3" height="6" fill="#ffffff"/><rect x="1697" y="269" width="1" height="44" fill="#00ff00"/><rect x="1695" y="280" width="5" height="31" fill="#00ff00"/><rect x="1696" y="281" width="3" height="29" fill="#000000"/><rect x="1705" y="263" width="1" height="26" fill="#00ff00"/><rect x="1703" y="272" width="5" height="9" fill="#00ff00"/><rect x="1704" y="273" width="3" height="7" fill="#000000"/><rect x="1713" y="269" width="1" height="37" fill="#00ff00"/><rect x="1711" y="272" width="5" height="22" fill="#00ff00"/><rect x="1712" y="273" width="3" height="20" fill="#ffffff"/><rect x="1721" y="286" width="1" height="11" fill="#00ff00"/><rect x="1719" y="291" width="5" height="3" fill="#00ff00"/><rect x="1720" y="292" width="3" height="1" fill="#ffffff"/><rect x="1729" y="287" width="1" height="10" fill="#00ff00"/><rect x="1727" y="292" width="5" height="4" fill="#00ff00"/><rect x="1728" y="293" width="3" height="2" fill="#000000"/><rect x="1737" y="292" width="1" height="54" fill="#00ff00"/><rect x="1735" y="292" width="5" height="32" fill="#00ff00"/><rect x="1736" y="293" width="3" height="30" fill="#ffffff"/><rect x="1745" y="321" width="1" height="18" fill="#00ff00"/><rect x="1743" y="321" width="5" height="3" fill="#00ff00"/><rect x="1744" y="322" width="3" height="1" fill="#000000"/><rect x="1753" y="280" width="1" height="57" fill="#00ff00"/><rect x="1751" y="288" width="5" height="35" fill="#00ff00"/><rect x="1752" y="289" width="3" height="33" fill="#000000"/><rect x="1761" y="273" width="1" height="30" fill="#00ff00"/><rect x="1759" y="288" width="5" height="12" fill="#00ff00"/><rect x="1760" y="289" width="3" height="10" fill="#ffffff"/><rect x="1769" y="288" width="1" height="25" fill="#00ff00"/><rect x="1767" y="298" width="5" height="1" fill="#00ff00"/><rect x="1777" y="290" width="1" height="17" fill="#00ff00"/><rect x="1775" y="298" width="5" height="1" fill="#00ff00"/><rect x="1785" y="276" width="1" height="27" fill="#00ff00"/><rect x="1783" y="289" width="5" height="10" fill="#00ff00"/><rect x="1784" y="290" width="3" height="8" fill="#000000"/><rect x="1793" y="276" width="1" height="17" fill="#00ff00"/><rect x="1791" y="279" width="5" height="12" fill="#00ff00"/><rect x="1792" y="280" width="3" height="10" fill="#000000"/><rect x="1801" y="247" width="1" height="36" fill="#00ff00"/><rect x="1799" y="252" width="5" height="29" fill="#00ff00"/><rect x="1800" y="253" width="3" height="27" fill="#000000"/><rect x="1809" y="211" width="1" height="47" fill="#00ff00"/><rect x="1807" y="212" width="5" height="41" fill="#00ff00"/><rect x="1808" y="213" width="3" height="39" fill="#000000"/><rect x="1817" y="212" width="1" height="36" fill="#00ff00"/><rect x="1815" y="212" width="5" height="11" fill="#00ff00"/><rect x="1816" y="213" width="3" height="9" fill="#ffffff"/><rect x="1825" y="184" width="1" height="44" fill="#00ff00"/><rect x="1823" y="184" width="5" height="39" fill="#00ff00"/><rect x="1824" y="185" width="3" height="37" fill="#000000"/><rect x="1833" y="164" width="1" height="34" fill="#00ff00"/><rect x="1831" y="184" width="5" height="1" fill="#00ff00"/><rect x="1841" y="179" width="1" height="16" fill="#00ff00"/><rect x="1839" y="184" width="5" height="7" fill="#00ff00"/><rect x="1840" y="185" width="3" height="5" fill="#ffffff"/><rect x="1849" y="168" width="1" height="27" fill="#00ff00"/><rect x="1847" y="173" width="5" height="18" fill="#00ff00"/><rect x="1848" y="174" width="3" height="16" fill="#000000"/><rect x="1857" y="154" width="1" height="24" fill="#00ff00"/><rect x="1855" y="166" width="5" height="7" fill="#00ff00"/><rect x="1856" y="167" width="3" height="5" fill="#000000"/></g></svg><div class="t" style="left:1773px;top:104px;font-size:10px;color:#fff;letter-spacing:-0.4px">Escalera guevon_35</div><svg style="left:1858px;top:104px" width="11" height="11" viewBox="0 0 11 11"><circle cx="5.5" cy="5.5" r="5" fill="none" stroke="#fff"/><circle cx="3.8" cy="4" r=".8" fill="#fff"/><circle cx="7.2" cy="4" r=".8" fill="#fff"/><path d="M3 6.5q2.5 3 5 0" stroke="#fff" fill="none"/></svg><div class="abs" style="left:1875px;top:160px;width:39px;height:12px;background:#fff"></div><div class="t" style="left:1880px;top:161px;font-size:10px;color:#000;letter-spacing:-0.2px">1.31200</div><div class="abs" style="left:294px;top:665px;width:1622px;height:1px;background:#fff"></div><div class="abs" style="left:294px;top:666px;width:1622px;height:1px;background:#000"></div><div class="abs" style="left:294px;top:667px;width:1622px;height:21px;background:#f0f0f0"></div><div class="abs" style="left:296px;top:667px;width:84px;height:19px;border:2px solid #000;border-top:none;background:#fff"></div><div class="t" style="left:306px;top:671px;font-size:11px;color:#000">EURUSD.,H4</div><div class="t" style="left:391px;top:671px;font-size:11px;color:#666">EURJPY.,Daily</div><div class="abs" style="left:472px;top:670px;width:1px;height:13px;background:#555"></div><div class="t" style="left:483px;top:671px;font-size:11px;color:#666">USDJPY.,Daily</div><div class="abs" style="left:564px;top:670px;width:1px;height:13px;background:#555"></div><svg style="left:1886px;top:673px" width="5" height="8" viewBox="0 0 5 8"><path d="M5 0v8l-5-4z" fill="#999"/></svg><svg style="left:1903px;top:673px" width="5" height="8" viewBox="0 0 5 8"><path d="M0 0v8l5-4z" fill="#999"/></svg><div class="abs" style="left:0px;top:688px;width:1920px;height:450px;background:#f0f0f0"></div><div class="t" style="left:3px;top:689px;font-size:13px;font-weight:bold;color:#000">×</div><div class="abs" style="left:1px;top:705px;width:13px;height:430px;background:linear-gradient(180deg,#dde8f4,#c0cedd)"></div><div class="t" style="left:1px;top:1133px;transform-origin:0 0;transform:rotate(-90deg);font-size:11px;color:#3a3a3a;width:70px">Terminal</div><div class="abs" style="left:15px;top:691px;width:1897px;height:424px;background:#fff;border-top:1px solid #a0a0a0;border-left:1px solid #a0a0a0"></div><div class="abs" style="left:16px;top:692px;width:1895px;height:23px;background:linear-gradient(180deg,#ffffff 0,#ffffff 45%,#f1f3f6 46%,#eef0f3 100%)"></div><div class="abs" style="left:16px;top:714px;width:1895px;height:1px;background:#d5d5d5"></div><div class="abs" style="left:202px;top:692px;width:1px;height:23px;background:#e0e0e0"></div><div class="abs" style="left:521px;top:692px;width:1px;height:23px;background:#e0e0e0"></div><div class="abs" style="left:651px;top:692px;width:1px;height:23px;background:#e0e0e0"></div><div class="abs" style="left:752px;top:692px;width:1px;height:23px;background:#e0e0e0"></div><div class="abs" style="left:882px;top:692px;width:1px;height:23px;background:#e0e0e0"></div><div class="abs" style="left:1025px;top:692px;width:1px;height:23px;background:#e0e0e0"></div><div class="abs" style="left:1169px;top:692px;width:1px;height:23px;background:#e0e0e0"></div><div class="abs" style="left:1313px;top:692px;width:1px;height:23px;background:#e0e0e0"></div><div class="abs" style="left:1458px;top:692px;width:1px;height:23px;background:#e0e0e0"></div><div class="abs" style="left:1602px;top:692px;width:1px;height:23px;background:#e0e0e0"></div><div class="abs" style="left:1745px;top:692px;width:1px;height:23px;background:#e0e0e0"></div><div class="abs" style="left:1911px;top:692px;width:1px;height:23px;background:#e0e0e0"></div><div class="t" style="left:23px;top:699px;font-size:11px;color:#000">Orden</div><div class="t" style="left:66px;top:697px;font-size:10px;color:#bbb">⁄△</div><div class="t" style="left:202px;top:699px;width:314px;text-align:right;font-size:11px;color:#000">Tiempo</div><div class="t" style="left:521px;top:699px;width:125px;text-align:right;font-size:11px;color:#000">Tipo</div><div class="t" style="left:651px;top:699px;width:96px;text-align:right;font-size:11px;color:#000">Volumen</div><div class="t" style="left:752px;top:699px;width:125px;text-align:right;font-size:11px;color:#000">Símbolo</div><div class="t" style="left:882px;top:699px;width:138px;text-align:right;font-size:11px;color:#000">Precio</div><div class="t" style="left:1025px;top:699px;width:139px;text-align:right;font-size:11px;color:#000">S / L</div><div class="t" style="left:1169px;top:699px;width:139px;text-align:right;font-size:11px;color:#000">T / P</div><div class="t" style="left:1313px;top:699px;width:140px;text-align:right;font-size:11px;color:#000">Precio</div><div class="t" style="left:1458px;top:699px;width:139px;text-align:right;font-size:11px;color:#000">Comisión</div><div class="t" style="left:1602px;top:699px;width:138px;text-align:right;font-size:11px;color:#000">Swap</div><div class="t" style="left:1745px;top:699px;width:161px;text-align:right;font-size:11px;color:#000">Beneficios</div><div class="abs" style="left:16px;top:716px;width:1895px;height:20px;background:#ffffff"></div><div class="abs" style="left:202px;top:716px;width:1px;height:20px;background:#d4d4d4"></div><div class="abs" style="left:521px;top:716px;width:1px;height:20px;background:#d4d4d4"></div><div class="abs" style="left:651px;top:716px;width:1px;height:20px;background:#d4d4d4"></div><div class="abs" style="left:752px;top:716px;width:1px;height:20px;background:#d4d4d4"></div><div class="abs" style="left:882px;top:716px;width:1px;height:20px;background:#d4d4d4"></div><div class="abs" style="left:1025px;top:716px;width:1px;height:20px;background:#d4d4d4"></div><div class="abs" style="left:1169px;top:716px;width:1px;height:20px;background:#d4d4d4"></div><div class="abs" style="left:1313px;top:716px;width:1px;height:20px;background:#d4d4d4"></div><div class="abs" style="left:1458px;top:716px;width:1px;height:20px;background:#d4d4d4"></div><div class="abs" style="left:1602px;top:716px;width:1px;height:20px;background:#d4d4d4"></div><div class="abs" style="left:1745px;top:716px;width:1px;height:20px;background:#d4d4d4"></div><svg style="left:19px;top:718px" width="15" height="16" viewBox="0 0 15 16"><path d="M1.5 0.5h7l3 3v10h-10z" fill="#fff" stroke="#555"/><path d="M8.5 0.5v3h3" fill="none" stroke="#555"/><circle cx="10.5" cy="12" r="3.3" fill="#2a8ae0" stroke="#fff" stroke-width=".6"/></svg><div class="t" style="left:41px;top:721px;font-size:11px;color:#000">43113571</div><div class="t" style="left:202px;top:721px;width:315px;text-align:right;font-size:11px;color:#000">2012.09.26 13:04</div><div class="t" style="left:521px;top:721px;width:126px;text-align:right;font-size:11px;color:#000">buy</div><div class="t" style="left:651px;top:721px;width:97px;text-align:right;font-size:11px;color:#000">1.00</div><div class="t" style="left:752px;top:721px;width:126px;text-align:right;font-size:11px;color:#000">eurusd.</div><div class="t" style="left:882px;top:721px;width:139px;text-align:right;font-size:11px;color:#000">1.29975</div><div class="t" style="left:1025px;top:721px;width:140px;text-align:right;font-size:11px;color:#000">1.29364</div><div class="t" style="left:1169px;top:721px;width:140px;text-align:right;font-size:11px;color:#000">0.00000</div><div class="t" style="left:1313px;top:721px;width:141px;text-align:right;font-size:11px;color:#000">1.31200</div><div class="t" style="left:1458px;top:721px;width:140px;text-align:right;font-size:11px;color:#000">0.00</div><div class="t" style="left:1602px;top:721px;width:139px;text-align:right;font-size:11px;color:#000">-71.41</div><div class="t" style="left:1745px;top:721px;width:162px;text-align:right;font-size:11px;color:#000">2 001.52</div><div class="abs" style="left:16px;top:736px;width:1895px;height:20px;background:#ececec"></div><div class="abs" style="left:202px;top:736px;width:1px;height:20px;background:#d4d4d4"></div><div class="abs" style="left:521px;top:736px;width:1px;height:20px;background:#d4d4d4"></div><div class="abs" style="left:651px;top:736px;width:1px;height:20px;background:#d4d4d4"></div><div class="abs" style="left:752px;top:736px;width:1px;height:20px;background:#d4d4d4"></div><div class="abs" style="left:882px;top:736px;width:1px;height:20px;background:#d4d4d4"></div><div class="abs" style="left:1025px;top:736px;width:1px;height:20px;background:#d4d4d4"></div><div class="abs" style="left:1169px;top:736px;width:1px;height:20px;background:#d4d4d4"></div><div class="abs" style="left:1313px;top:736px;width:1px;height:20px;background:#d4d4d4"></div><div class="abs" style="left:1458px;top:736px;width:1px;height:20px;background:#d4d4d4"></div><div class="abs" style="left:1602px;top:736px;width:1px;height:20px;background:#d4d4d4"></div><div class="abs" style="left:1745px;top:736px;width:1px;height:20px;background:#d4d4d4"></div><svg style="left:19px;top:738px" width="15" height="16" viewBox="0 0 15 16"><path d="M1.5 0.5h7l3 3v10h-10z" fill="#fff" stroke="#555"/><path d="M8.5 0.5v3h3" fill="none" stroke="#555"/><circle cx="10.5" cy="12" r="3.3" fill="#2a8ae0" stroke="#fff" stroke-width=".6"/></svg><div class="t" style="left:41px;top:741px;font-size:11px;color:#000">43113587</div><div class="t" style="left:202px;top:741px;width:315px;text-align:right;font-size:11px;color:#000">2012.10.16 23:20</div><div class="t" style="left:521px;top:741px;width:126px;text-align:right;font-size:11px;color:#000">buy</div><div class="t" style="left:651px;top:741px;width:97px;text-align:right;font-size:11px;color:#000">1.00</div><div class="t" style="left:752px;top:741px;width:126px;text-align:right;font-size:11px;color:#000">eurusd.</div><div class="t" style="left:882px;top:741px;width:139px;text-align:right;font-size:11px;color:#000">1.30975</div><div class="t" style="left:1025px;top:741px;width:140px;text-align:right;font-size:11px;color:#000">1.30364</div><div class="t" style="left:1169px;top:741px;width:140px;text-align:right;font-size:11px;color:#000">0.00000</div><div class="t" style="left:1313px;top:741px;width:141px;text-align:right;font-size:11px;color:#000">1.31200</div><div class="t" style="left:1458px;top:741px;width:140px;text-align:right;font-size:11px;color:#000">0.00</div><div class="t" style="left:1602px;top:741px;width:139px;text-align:right;font-size:11px;color:#000">-3.36</div><div class="t" style="left:1745px;top:741px;width:162px;text-align:right;font-size:11px;color:#000">171.49</div><div class="abs" style="left:16px;top:756px;width:1895px;height:20px;background:#ffffff"></div><div class="abs" style="left:202px;top:756px;width:1px;height:20px;background:#d4d4d4"></div><div class="abs" style="left:521px;top:756px;width:1px;height:20px;background:#d4d4d4"></div><div class="abs" style="left:651px;top:756px;width:1px;height:20px;background:#d4d4d4"></div><div class="abs" style="left:752px;top:756px;width:1px;height:20px;background:#d4d4d4"></div><div class="abs" style="left:882px;top:756px;width:1px;height:20px;background:#d4d4d4"></div><div class="abs" style="left:1025px;top:756px;width:1px;height:20px;background:#d4d4d4"></div><div class="abs" style="left:1169px;top:756px;width:1px;height:20px;background:#d4d4d4"></div><div class="abs" style="left:1313px;top:756px;width:1px;height:20px;background:#d4d4d4"></div><div class="abs" style="left:1458px;top:756px;width:1px;height:20px;background:#d4d4d4"></div><div class="abs" style="left:1602px;top:756px;width:1px;height:20px;background:#d4d4d4"></div><div class="abs" style="left:1745px;top:756px;width:1px;height:20px;background:#d4d4d4"></div><svg style="left:19px;top:758px" width="15" height="16" viewBox="0 0 15 16"><path d="M1.5 0.5h7l3 3v10h-10z" fill="#fff" stroke="#555"/><path d="M8.5 0.5v3h3" fill="none" stroke="#555"/><circle cx="10.5" cy="12" r="3.3" fill="#e04a20" stroke="#fff" stroke-width=".6"/></svg><div class="t" style="left:41px;top:761px;font-size:11px;color:#000">43113588</div><div class="t" style="left:202px;top:761px;width:315px;text-align:right;font-size:11px;color:#000">2012.10.16 23:45</div><div class="t" style="left:521px;top:761px;width:126px;text-align:right;font-size:11px;color:#000">sell</div><div class="t" style="left:651px;top:761px;width:97px;text-align:right;font-size:11px;color:#000">1.00</div><div class="t" style="left:752px;top:761px;width:126px;text-align:right;font-size:11px;color:#000">eurusd.</div><div class="t" style="left:882px;top:761px;width:139px;text-align:right;font-size:11px;color:#000">1.30964</div><div class="t" style="left:1025px;top:761px;width:140px;text-align:right;font-size:11px;color:#000">1.31575</div><div class="t" style="left:1169px;top:761px;width:140px;text-align:right;font-size:11px;color:#000">0.00000</div><div class="t" style="left:1313px;top:761px;width:141px;text-align:right;font-size:11px;color:#000">1.31212</div><div class="t" style="left:1458px;top:761px;width:140px;text-align:right;font-size:11px;color:#000">0.00</div><div class="t" style="left:1602px;top:761px;width:139px;text-align:right;font-size:11px;color:#000">-2.55</div><div class="t" style="left:1745px;top:761px;width:162px;text-align:right;font-size:11px;color:#000">-189.01</div><div class="abs" style="left:16px;top:776px;width:1895px;height:20px;background:#ececec"></div><div class="abs" style="left:202px;top:776px;width:1px;height:20px;background:#d4d4d4"></div><div class="abs" style="left:521px;top:776px;width:1px;height:20px;background:#d4d4d4"></div><div class="abs" style="left:651px;top:776px;width:1px;height:20px;background:#d4d4d4"></div><div class="abs" style="left:752px;top:776px;width:1px;height:20px;background:#d4d4d4"></div><div class="abs" style="left:882px;top:776px;width:1px;height:20px;background:#d4d4d4"></div><div class="abs" style="left:1025px;top:776px;width:1px;height:20px;background:#d4d4d4"></div><div class="abs" style="left:1169px;top:776px;width:1px;height:20px;background:#d4d4d4"></div><div class="abs" style="left:1313px;top:776px;width:1px;height:20px;background:#d4d4d4"></div><div class="abs" style="left:1458px;top:776px;width:1px;height:20px;background:#d4d4d4"></div><div class="abs" style="left:1602px;top:776px;width:1px;height:20px;background:#d4d4d4"></div><div class="abs" style="left:1745px;top:776px;width:1px;height:20px;background:#d4d4d4"></div><svg style="left:19px;top:778px" width="15" height="16" viewBox="0 0 15 16"><path d="M1.5 0.5h7l3 3v10h-10z" fill="#fff" stroke="#555"/><path d="M8.5 0.5v3h3" fill="none" stroke="#555"/><circle cx="10.5" cy="12" r="3.3" fill="#2a8ae0" stroke="#fff" stroke-width=".6"/></svg><div class="t" style="left:41px;top:781px;font-size:11px;color:#000">43301779</div><div class="t" style="left:202px;top:781px;width:315px;text-align:right;font-size:11px;color:#000">2012.10.16 13:44</div><div class="t" style="left:521px;top:781px;width:126px;text-align:right;font-size:11px;color:#000">buy</div><div class="t" style="left:651px;top:781px;width:97px;text-align:right;font-size:11px;color:#000">1.00</div><div class="t" style="left:752px;top:781px;width:126px;text-align:right;font-size:11px;color:#000">eurusd.</div><div class="t" style="left:882px;top:781px;width:139px;text-align:right;font-size:11px;color:#000">1.30375</div><div class="t" style="left:1025px;top:781px;width:140px;text-align:right;font-size:11px;color:#000">1.29764</div><div class="t" style="left:1169px;top:781px;width:140px;text-align:right;font-size:11px;color:#000">0.00000</div><div class="t" style="left:1313px;top:781px;width:141px;text-align:right;font-size:11px;color:#000">1.31200</div><div class="t" style="left:1458px;top:781px;width:140px;text-align:right;font-size:11px;color:#000">0.00</div><div class="t" style="left:1602px;top:781px;width:139px;text-align:right;font-size:11px;color:#000">-3.36</div><div class="t" style="left:1745px;top:781px;width:162px;text-align:right;font-size:11px;color:#000">628.81</div><div class="abs" style="left:16px;top:796px;width:1895px;height:20px;background:#ffffff"></div><div class="abs" style="left:202px;top:796px;width:1px;height:20px;background:#d4d4d4"></div><div class="abs" style="left:521px;top:796px;width:1px;height:20px;background:#d4d4d4"></div><div class="abs" style="left:651px;top:796px;width:1px;height:20px;background:#d4d4d4"></div><div class="abs" style="left:752px;top:796px;width:1px;height:20px;background:#d4d4d4"></div><div class="abs" style="left:882px;top:796px;width:1px;height:20px;background:#d4d4d4"></div><div class="abs" style="left:1025px;top:796px;width:1px;height:20px;background:#d4d4d4"></div><div class="abs" style="left:1169px;top:796px;width:1px;height:20px;background:#d4d4d4"></div><div class="abs" style="left:1313px;top:796px;width:1px;height:20px;background:#d4d4d4"></div><div class="abs" style="left:1458px;top:796px;width:1px;height:20px;background:#d4d4d4"></div><div class="abs" style="left:1602px;top:796px;width:1px;height:20px;background:#d4d4d4"></div><div class="abs" style="left:1745px;top:796px;width:1px;height:20px;background:#d4d4d4"></div><svg style="left:19px;top:798px" width="15" height="16" viewBox="0 0 15 16"><path d="M1.5 0.5h7l3 3v10h-10z" fill="#fff" stroke="#555"/><path d="M8.5 0.5v3h3" fill="none" stroke="#555"/><circle cx="10.5" cy="12" r="3.3" fill="#2a8ae0" stroke="#fff" stroke-width=".6"/></svg><div class="t" style="left:41px;top:801px;font-size:11px;color:#000">43350250</div><div class="t" style="left:202px;top:801px;width:315px;text-align:right;font-size:11px;color:#000">2012.10.11 12:35</div><div class="t" style="left:521px;top:801px;width:126px;text-align:right;font-size:11px;color:#000">buy</div><div class="t" style="left:651px;top:801px;width:97px;text-align:right;font-size:11px;color:#000">1.00</div><div class="t" style="left:752px;top:801px;width:126px;text-align:right;font-size:11px;color:#000">eurusd.</div><div class="t" style="left:882px;top:801px;width:139px;text-align:right;font-size:11px;color:#000">1.29175</div><div class="t" style="left:1025px;top:801px;width:140px;text-align:right;font-size:11px;color:#000">1.28564</div><div class="t" style="left:1169px;top:801px;width:140px;text-align:right;font-size:11px;color:#000">0.00000</div><div class="t" style="left:1313px;top:801px;width:141px;text-align:right;font-size:11px;color:#000">1.31200</div><div class="t" style="left:1458px;top:801px;width:140px;text-align:right;font-size:11px;color:#000">0.00</div><div class="t" style="left:1602px;top:801px;width:139px;text-align:right;font-size:11px;color:#000">-20.42</div><div class="t" style="left:1745px;top:801px;width:162px;text-align:right;font-size:11px;color:#000">1 543.45</div><div class="abs" style="left:16px;top:816px;width:1895px;height:20px;background:#ececec"></div><div class="abs" style="left:202px;top:816px;width:1px;height:20px;background:#d4d4d4"></div><div class="abs" style="left:521px;top:816px;width:1px;height:20px;background:#d4d4d4"></div><div class="abs" style="left:651px;top:816px;width:1px;height:20px;background:#d4d4d4"></div><div class="abs" style="left:752px;top:816px;width:1px;height:20px;background:#d4d4d4"></div><div class="abs" style="left:882px;top:816px;width:1px;height:20px;background:#d4d4d4"></div><div class="abs" style="left:1025px;top:816px;width:1px;height:20px;background:#d4d4d4"></div><div class="abs" style="left:1169px;top:816px;width:1px;height:20px;background:#d4d4d4"></div><div class="abs" style="left:1313px;top:816px;width:1px;height:20px;background:#d4d4d4"></div><div class="abs" style="left:1458px;top:816px;width:1px;height:20px;background:#d4d4d4"></div><div class="abs" style="left:1602px;top:816px;width:1px;height:20px;background:#d4d4d4"></div><div class="abs" style="left:1745px;top:816px;width:1px;height:20px;background:#d4d4d4"></div><svg style="left:19px;top:818px" width="15" height="16" viewBox="0 0 15 16"><path d="M1.5 0.5h7l3 3v10h-10z" fill="#fff" stroke="#555"/><path d="M8.5 0.5v3h3" fill="none" stroke="#555"/><circle cx="10.5" cy="12" r="3.3" fill="#2a8ae0" stroke="#fff" stroke-width=".6"/></svg><div class="t" style="left:41px;top:821px;font-size:11px;color:#000">43416422</div><div class="t" style="left:202px;top:821px;width:315px;text-align:right;font-size:11px;color:#000">2012.10.15 13:05</div><div class="t" style="left:521px;top:821px;width:126px;text-align:right;font-size:11px;color:#000">buy</div><div class="t" style="left:651px;top:821px;width:97px;text-align:right;font-size:11px;color:#000">1.00</div><div class="t" style="left:752px;top:821px;width:126px;text-align:right;font-size:11px;color:#000">eurusd.</div><div class="t" style="left:882px;top:821px;width:139px;text-align:right;font-size:11px;color:#000">1.29775</div><div class="t" style="left:1025px;top:821px;width:140px;text-align:right;font-size:11px;color:#000">1.29164</div><div class="t" style="left:1169px;top:821px;width:140px;text-align:right;font-size:11px;color:#000">0.00000</div><div class="t" style="left:1313px;top:821px;width:141px;text-align:right;font-size:11px;color:#000">1.31200</div><div class="t" style="left:1458px;top:821px;width:140px;text-align:right;font-size:11px;color:#000">0.00</div><div class="t" style="left:1602px;top:821px;width:139px;text-align:right;font-size:11px;color:#000">-6.76</div><div class="t" style="left:1745px;top:821px;width:162px;text-align:right;font-size:11px;color:#000">1 086.13</div><div class="abs" style="left:16px;top:836px;width:1895px;height:20px;background:#c8c8c8"></div><svg style="left:19px;top:838px" width="15" height="16" viewBox="0 0 15 16"><rect x="0.5" y="0.5" width="13" height="14" fill="#fff" stroke="#555"/><path d="M7 3l4 4h-2.5v4h-3v-4h-2.5z" fill="#20a020"/></svg><div class="t" style="left:41px;top:841px;font-size:11px;font-weight:bold;color:#000">Balance: 13 469.29&nbsp; Patrimonio: 18 603.82&nbsp; Margen: 5 000.00&nbsp; Margen libre: 8 469.29&nbsp; Nivel del margen: 372.08%</div><div class="t" style="left:1745px;top:841px;width:160px;text-align:right;font-size:11px;font-weight:bold;color:#000">5 134.53</div><div class="abs" style="left:16px;top:856px;width:1895px;height:20px;background:#ececec"></div><div class="abs" style="left:202px;top:856px;width:1px;height:20px;background:#d4d4d4"></div><div class="abs" style="left:521px;top:856px;width:1px;height:20px;background:#d4d4d4"></div><div class="abs" style="left:651px;top:856px;width:1px;height:20px;background:#d4d4d4"></div><div class="abs" style="left:752px;top:856px;width:1px;height:20px;background:#d4d4d4"></div><div class="abs" style="left:882px;top:856px;width:1px;height:20px;background:#d4d4d4"></div><div class="abs" style="left:1025px;top:856px;width:1px;height:20px;background:#d4d4d4"></div><div class="abs" style="left:1169px;top:856px;width:1px;height:20px;background:#d4d4d4"></div><div class="abs" style="left:1313px;top:856px;width:1px;height:20px;background:#d4d4d4"></div><div class="abs" style="left:1458px;top:856px;width:1px;height:20px;background:#d4d4d4"></div><div class="abs" style="left:1745px;top:856px;width:1px;height:20px;background:#d4d4d4"></div><svg style="left:19px;top:858px" width="15" height="16" viewBox="0 0 15 16"><path d="M1.5 0.5h7l3 3v10h-10z" fill="#fff" stroke="#555"/><path d="M8.5 0.5v3h3" fill="none" stroke="#555"/><circle cx="10.5" cy="12" r="3.3" fill="#2a8ae0" stroke="#fff" stroke-width=".6"/></svg><div class="t" style="left:41px;top:861px;font-size:11px;color:#000">43113576</div><div class="t" style="left:202px;top:861px;width:315px;text-align:right;font-size:11px;color:#000">2012.09.26 13:04</div><div class="t" style="left:521px;top:861px;width:126px;text-align:right;font-size:11px;color:#000">buy limit</div><div class="t" style="left:651px;top:861px;width:97px;text-align:right;font-size:11px;color:#000">1.00</div><div class="t" style="left:752px;top:861px;width:126px;text-align:right;font-size:11px;color:#000">eurusd.</div><div class="t" style="left:882px;top:861px;width:139px;text-align:right;font-size:11px;color:#000">1.27975</div><div class="t" style="left:1025px;top:861px;width:140px;text-align:right;font-size:11px;color:#000">1.27364</div><div class="t" style="left:1169px;top:861px;width:140px;text-align:right;font-size:11px;color:#000">0.00000</div><div class="t" style="left:1313px;top:861px;width:141px;text-align:right;font-size:11px;color:#000">1.31212</div><div class="t" style="left:1458px;top:861px;width:140px;text-align:right;font-size:11px;color:#000"></div><div class="t" style="left:1602px;top:861px;width:139px;text-align:right;font-size:11px;color:#000"></div><div class="t" style="left:1745px;top:861px;width:162px;text-align:right;font-size:11px;color:#000"></div><div class="abs" style="left:16px;top:876px;width:1895px;height:20px;background:#ffffff"></div><div class="abs" style="left:202px;top:876px;width:1px;height:20px;background:#d4d4d4"></div><div class="abs" style="left:521px;top:876px;width:1px;height:20px;background:#d4d4d4"></div><div class="abs" style="left:651px;top:876px;width:1px;height:20px;background:#d4d4d4"></div><div class="abs" style="left:752px;top:876px;width:1px;height:20px;background:#d4d4d4"></div><div class="abs" style="left:882px;top:876px;width:1px;height:20px;background:#d4d4d4"></div><div class="abs" style="left:1025px;top:876px;width:1px;height:20px;background:#d4d4d4"></div><div class="abs" style="left:1169px;top:876px;width:1px;height:20px;background:#d4d4d4"></div><div class="abs" style="left:1313px;top:876px;width:1px;height:20px;background:#d4d4d4"></div><div class="abs" style="left:1458px;top:876px;width:1px;height:20px;background:#d4d4d4"></div><div class="abs" style="left:1745px;top:876px;width:1px;height:20px;background:#d4d4d4"></div><svg style="left:19px;top:878px" width="15" height="16" viewBox="0 0 15 16"><path d="M1.5 0.5h7l3 3v10h-10z" fill="#fff" stroke="#555"/><path d="M8.5 0.5v3h3" fill="none" stroke="#555"/><circle cx="10.5" cy="12" r="3.3" fill="#e04a20" stroke="#fff" stroke-width=".6"/></svg><div class="t" style="left:41px;top:881px;font-size:11px;color:#000">43113577</div><div class="t" style="left:202px;top:881px;width:315px;text-align:right;font-size:11px;color:#000">2012.09.26 13:04</div><div class="t" style="left:521px;top:881px;width:126px;text-align:right;font-size:11px;color:#000">sell stop</div><div class="t" style="left:651px;top:881px;width:97px;text-align:right;font-size:11px;color:#000">1.00</div><div class="t" style="left:752px;top:881px;width:126px;text-align:right;font-size:11px;color:#000">eurusd.</div><div class="t" style="left:882px;top:881px;width:139px;text-align:right;font-size:11px;color:#000">1.27964</div><div class="t" style="left:1025px;top:881px;width:140px;text-align:right;font-size:11px;color:#000">1.28575</div><div class="t" style="left:1169px;top:881px;width:140px;text-align:right;font-size:11px;color:#000">0.00000</div><div class="t" style="left:1313px;top:881px;width:141px;text-align:right;font-size:11px;color:#000">1.31200</div><div class="t" style="left:1458px;top:881px;width:140px;text-align:right;font-size:11px;color:#000"></div><div class="t" style="left:1602px;top:881px;width:139px;text-align:right;font-size:11px;color:#000"></div><div class="t" style="left:1745px;top:881px;width:162px;text-align:right;font-size:11px;color:#000"></div><div class="abs" style="left:16px;top:896px;width:1895px;height:20px;background:#ececec"></div><div class="abs" style="left:202px;top:896px;width:1px;height:20px;background:#d4d4d4"></div><div class="abs" style="left:521px;top:896px;width:1px;height:20px;background:#d4d4d4"></div><div class="abs" style="left:651px;top:896px;width:1px;height:20px;background:#d4d4d4"></div><div class="abs" style="left:752px;top:896px;width:1px;height:20px;background:#d4d4d4"></div><div class="abs" style="left:882px;top:896px;width:1px;height:20px;background:#d4d4d4"></div><div class="abs" style="left:1025px;top:896px;width:1px;height:20px;background:#d4d4d4"></div><div class="abs" style="left:1169px;top:896px;width:1px;height:20px;background:#d4d4d4"></div><div class="abs" style="left:1313px;top:896px;width:1px;height:20px;background:#d4d4d4"></div><div class="abs" style="left:1458px;top:896px;width:1px;height:20px;background:#d4d4d4"></div><div class="abs" style="left:1745px;top:896px;width:1px;height:20px;background:#d4d4d4"></div><svg style="left:19px;top:898px" width="15" height="16" viewBox="0 0 15 16"><path d="M1.5 0.5h7l3 3v10h-10z" fill="#fff" stroke="#555"/><path d="M8.5 0.5v3h3" fill="none" stroke="#555"/><circle cx="10.5" cy="12" r="3.3" fill="#2a8ae0" stroke="#fff" stroke-width=".6"/></svg><div class="t" style="left:41px;top:901px;font-size:11px;color:#000">43113581</div><div class="t" style="left:202px;top:901px;width:315px;text-align:right;font-size:11px;color:#000">2012.09.26 13:04</div><div class="t" style="left:521px;top:901px;width:126px;text-align:right;font-size:11px;color:#000">buy limit</div><div class="t" style="left:651px;top:901px;width:97px;text-align:right;font-size:11px;color:#000">1.00</div><div class="t" style="left:752px;top:901px;width:126px;text-align:right;font-size:11px;color:#000">eurusd.</div><div class="t" style="left:882px;top:901px;width:139px;text-align:right;font-size:11px;color:#000">1.27375</div><div class="t" style="left:1025px;top:901px;width:140px;text-align:right;font-size:11px;color:#000">1.26764</div><div class="t" style="left:1169px;top:901px;width:140px;text-align:right;font-size:11px;color:#000">0.00000</div><div class="t" style="left:1313px;top:901px;width:141px;text-align:right;font-size:11px;color:#000">1.31212</div><div class="t" style="left:1458px;top:901px;width:140px;text-align:right;font-size:11px;color:#000"></div><div class="t" style="left:1602px;top:901px;width:139px;text-align:right;font-size:11px;color:#000"></div><div class="t" style="left:1745px;top:901px;width:162px;text-align:right;font-size:11px;color:#000"></div><div class="abs" style="left:16px;top:916px;width:1895px;height:20px;background:#ffffff"></div><div class="abs" style="left:202px;top:916px;width:1px;height:20px;background:#d4d4d4"></div><div class="abs" style="left:521px;top:916px;width:1px;height:20px;background:#d4d4d4"></div><div class="abs" style="left:651px;top:916px;width:1px;height:20px;background:#d4d4d4"></div><div class="abs" style="left:752px;top:916px;width:1px;height:20px;background:#d4d4d4"></div><div class="abs" style="left:882px;top:916px;width:1px;height:20px;background:#d4d4d4"></div><div class="abs" style="left:1025px;top:916px;width:1px;height:20px;background:#d4d4d4"></div><div class="abs" style="left:1169px;top:916px;width:1px;height:20px;background:#d4d4d4"></div><div class="abs" style="left:1313px;top:916px;width:1px;height:20px;background:#d4d4d4"></div><div class="abs" style="left:1458px;top:916px;width:1px;height:20px;background:#d4d4d4"></div><div class="abs" style="left:1745px;top:916px;width:1px;height:20px;background:#d4d4d4"></div><svg style="left:19px;top:918px" width="15" height="16" viewBox="0 0 15 16"><path d="M1.5 0.5h7l3 3v10h-10z" fill="#fff" stroke="#555"/><path d="M8.5 0.5v3h3" fill="none" stroke="#555"/><circle cx="10.5" cy="12" r="3.3" fill="#e04a20" stroke="#fff" stroke-width=".6"/></svg><div class="t" style="left:41px;top:921px;font-size:11px;color:#000">43113582</div><div class="t" style="left:202px;top:921px;width:315px;text-align:right;font-size:11px;color:#000">2012.09.26 13:04</div><div class="t" style="left:521px;top:921px;width:126px;text-align:right;font-size:11px;color:#000">sell stop</div><div class="t" style="left:651px;top:921px;width:97px;text-align:right;font-size:11px;color:#000">1.00</div><div class="t" style="left:752px;top:921px;width:126px;text-align:right;font-size:11px;color:#000">eurusd.</div><div class="t" style="left:882px;top:921px;width:139px;text-align:right;font-size:11px;color:#000">1.27364</div><div class="t" style="left:1025px;top:921px;width:140px;text-align:right;font-size:11px;color:#000">1.27975</div><div class="t" style="left:1169px;top:921px;width:140px;text-align:right;font-size:11px;color:#000">0.00000</div><div class="t" style="left:1313px;top:921px;width:141px;text-align:right;font-size:11px;color:#000">1.31200</div><div class="t" style="left:1458px;top:921px;width:140px;text-align:right;font-size:11px;color:#000"></div><div class="t" style="left:1602px;top:921px;width:139px;text-align:right;font-size:11px;color:#000"></div><div class="t" style="left:1745px;top:921px;width:162px;text-align:right;font-size:11px;color:#000"></div><div class="abs" style="left:16px;top:936px;width:1895px;height:20px;background:#ececec"></div><div class="abs" style="left:202px;top:936px;width:1px;height:20px;background:#d4d4d4"></div><div class="abs" style="left:521px;top:936px;width:1px;height:20px;background:#d4d4d4"></div><div class="abs" style="left:651px;top:936px;width:1px;height:20px;background:#d4d4d4"></div><div class="abs" style="left:752px;top:936px;width:1px;height:20px;background:#d4d4d4"></div><div class="abs" style="left:882px;top:936px;width:1px;height:20px;background:#d4d4d4"></div><div class="abs" style="left:1025px;top:936px;width:1px;height:20px;background:#d4d4d4"></div><div class="abs" style="left:1169px;top:936px;width:1px;height:20px;background:#d4d4d4"></div><div class="abs" style="left:1313px;top:936px;width:1px;height:20px;background:#d4d4d4"></div><div class="abs" style="left:1458px;top:936px;width:1px;height:20px;background:#d4d4d4"></div><div class="abs" style="left:1745px;top:936px;width:1px;height:20px;background:#d4d4d4"></div><svg style="left:19px;top:938px" width="15" height="16" viewBox="0 0 15 16"><path d="M1.5 0.5h7l3 3v10h-10z" fill="#fff" stroke="#555"/><path d="M8.5 0.5v3h3" fill="none" stroke="#555"/><circle cx="10.5" cy="12" r="3.3" fill="#2a8ae0" stroke="#fff" stroke-width=".6"/></svg><div class="t" style="left:41px;top:941px;font-size:11px;color:#000">43113585</div><div class="t" style="left:202px;top:941px;width:315px;text-align:right;font-size:11px;color:#000">2012.09.26 13:04</div><div class="t" style="left:521px;top:941px;width:126px;text-align:right;font-size:11px;color:#000">buy limit</div><div class="t" style="left:651px;top:941px;width:97px;text-align:right;font-size:11px;color:#000">1.00</div><div class="t" style="left:752px;top:941px;width:126px;text-align:right;font-size:11px;color:#000">eurusd.</div><div class="t" style="left:882px;top:941px;width:139px;text-align:right;font-size:11px;color:#000">1.26775</div><div class="t" style="left:1025px;top:941px;width:140px;text-align:right;font-size:11px;color:#000">1.26164</div><div class="t" style="left:1169px;top:941px;width:140px;text-align:right;font-size:11px;color:#000">0.00000</div><div class="t" style="left:1313px;top:941px;width:141px;text-align:right;font-size:11px;color:#000">1.31212</div><div class="t" style="left:1458px;top:941px;width:140px;text-align:right;font-size:11px;color:#000"></div><div class="t" style="left:1602px;top:941px;width:139px;text-align:right;font-size:11px;color:#000"></div><div class="t" style="left:1745px;top:941px;width:162px;text-align:right;font-size:11px;color:#000"></div><div class="abs" style="left:16px;top:956px;width:1895px;height:20px;background:#ffffff"></div><div class="abs" style="left:202px;top:956px;width:1px;height:20px;background:#d4d4d4"></div><div class="abs" style="left:521px;top:956px;width:1px;height:20px;background:#d4d4d4"></div><div class="abs" style="left:651px;top:956px;width:1px;height:20px;background:#d4d4d4"></div><div class="abs" style="left:752px;top:956px;width:1px;height:20px;background:#d4d4d4"></div><div class="abs" style="left:882px;top:956px;width:1px;height:20px;background:#d4d4d4"></div><div class="abs" style="left:1025px;top:956px;width:1px;height:20px;background:#d4d4d4"></div><div class="abs" style="left:1169px;top:956px;width:1px;height:20px;background:#d4d4d4"></div><div class="abs" style="left:1313px;top:956px;width:1px;height:20px;background:#d4d4d4"></div><div class="abs" style="left:1458px;top:956px;width:1px;height:20px;background:#d4d4d4"></div><div class="abs" style="left:1745px;top:956px;width:1px;height:20px;background:#d4d4d4"></div><svg style="left:19px;top:958px" width="15" height="16" viewBox="0 0 15 16"><path d="M1.5 0.5h7l3 3v10h-10z" fill="#fff" stroke="#555"/><path d="M8.5 0.5v3h3" fill="none" stroke="#555"/><circle cx="10.5" cy="12" r="3.3" fill="#e04a20" stroke="#fff" stroke-width=".6"/></svg><div class="t" style="left:41px;top:961px;font-size:11px;color:#000">43113586</div><div class="t" style="left:202px;top:961px;width:315px;text-align:right;font-size:11px;color:#000">2012.09.26 13:04</div><div class="t" style="left:521px;top:961px;width:126px;text-align:right;font-size:11px;color:#000">sell stop</div><div class="t" style="left:651px;top:961px;width:97px;text-align:right;font-size:11px;color:#000">1.00</div><div class="t" style="left:752px;top:961px;width:126px;text-align:right;font-size:11px;color:#000">eurusd.</div><div class="t" style="left:882px;top:961px;width:139px;text-align:right;font-size:11px;color:#000">1.26764</div><div class="t" style="left:1025px;top:961px;width:140px;text-align:right;font-size:11px;color:#000">1.27375</div><div class="t" style="left:1169px;top:961px;width:140px;text-align:right;font-size:11px;color:#000">0.00000</div><div class="t" style="left:1313px;top:961px;width:141px;text-align:right;font-size:11px;color:#000">1.31200</div><div class="t" style="left:1458px;top:961px;width:140px;text-align:right;font-size:11px;color:#000"></div><div class="t" style="left:1602px;top:961px;width:139px;text-align:right;font-size:11px;color:#000"></div><div class="t" style="left:1745px;top:961px;width:162px;text-align:right;font-size:11px;color:#000"></div><div class="abs" style="left:16px;top:976px;width:1895px;height:20px;background:#ececec"></div><div class="abs" style="left:202px;top:976px;width:1px;height:20px;background:#d4d4d4"></div><div class="abs" style="left:521px;top:976px;width:1px;height:20px;background:#d4d4d4"></div><div class="abs" style="left:651px;top:976px;width:1px;height:20px;background:#d4d4d4"></div><div class="abs" style="left:752px;top:976px;width:1px;height:20px;background:#d4d4d4"></div><div class="abs" style="left:882px;top:976px;width:1px;height:20px;background:#d4d4d4"></div><div class="abs" style="left:1025px;top:976px;width:1px;height:20px;background:#d4d4d4"></div><div class="abs" style="left:1169px;top:976px;width:1px;height:20px;background:#d4d4d4"></div><div class="abs" style="left:1313px;top:976px;width:1px;height:20px;background:#d4d4d4"></div><div class="abs" style="left:1458px;top:976px;width:1px;height:20px;background:#d4d4d4"></div><div class="abs" style="left:1745px;top:976px;width:1px;height:20px;background:#d4d4d4"></div><svg style="left:19px;top:978px" width="15" height="16" viewBox="0 0 15 16"><path d="M1.5 0.5h7l3 3v10h-10z" fill="#fff" stroke="#555"/><path d="M8.5 0.5v3h3" fill="none" stroke="#555"/><circle cx="10.5" cy="12" r="3.3" fill="#2a8ae0" stroke="#fff" stroke-width=".6"/></svg><div class="t" style="left:41px;top:981px;font-size:11px;color:#000">43113589</div><div class="t" style="left:202px;top:981px;width:315px;text-align:right;font-size:11px;color:#000">2012.09.26 13:04</div><div class="t" style="left:521px;top:981px;width:126px;text-align:right;font-size:11px;color:#000">buy limit</div><div class="t" style="left:651px;top:981px;width:97px;text-align:right;font-size:11px;color:#000">1.00</div><div class="t" style="left:752px;top:981px;width:126px;text-align:right;font-size:11px;color:#000">eurusd.</div><div class="t" style="left:882px;top:981px;width:139px;text-align:right;font-size:11px;color:#000">1.26175</div><div class="t" style="left:1025px;top:981px;width:140px;text-align:right;font-size:11px;color:#000">1.25564</div><div class="t" style="left:1169px;top:981px;width:140px;text-align:right;font-size:11px;color:#000">0.00000</div><div class="t" style="left:1313px;top:981px;width:141px;text-align:right;font-size:11px;color:#000">1.31212</div><div class="t" style="left:1458px;top:981px;width:140px;text-align:right;font-size:11px;color:#000"></div><div class="t" style="left:1602px;top:981px;width:139px;text-align:right;font-size:11px;color:#000"></div><div class="t" style="left:1745px;top:981px;width:162px;text-align:right;font-size:11px;color:#000"></div><div class="abs" style="left:16px;top:996px;width:1895px;height:20px;background:#ffffff"></div><div class="abs" style="left:202px;top:996px;width:1px;height:20px;background:#d4d4d4"></div><div class="abs" style="left:521px;top:996px;width:1px;height:20px;background:#d4d4d4"></div><div class="abs" style="left:651px;top:996px;width:1px;height:20px;background:#d4d4d4"></div><div class="abs" style="left:752px;top:996px;width:1px;height:20px;background:#d4d4d4"></div><div class="abs" style="left:882px;top:996px;width:1px;height:20px;background:#d4d4d4"></div><div class="abs" style="left:1025px;top:996px;width:1px;height:20px;background:#d4d4d4"></div><div class="abs" style="left:1169px;top:996px;width:1px;height:20px;background:#d4d4d4"></div><div class="abs" style="left:1313px;top:996px;width:1px;height:20px;background:#d4d4d4"></div><div class="abs" style="left:1458px;top:996px;width:1px;height:20px;background:#d4d4d4"></div><div class="abs" style="left:1745px;top:996px;width:1px;height:20px;background:#d4d4d4"></div><svg style="left:19px;top:998px" width="15" height="16" viewBox="0 0 15 16"><path d="M1.5 0.5h7l3 3v10h-10z" fill="#fff" stroke="#555"/><path d="M8.5 0.5v3h3" fill="none" stroke="#555"/><circle cx="10.5" cy="12" r="3.3" fill="#e04a20" stroke="#fff" stroke-width=".6"/></svg><div class="t" style="left:41px;top:1001px;font-size:11px;color:#000">43113590</div><div class="t" style="left:202px;top:1001px;width:315px;text-align:right;font-size:11px;color:#000">2012.09.26 13:04</div><div class="t" style="left:521px;top:1001px;width:126px;text-align:right;font-size:11px;color:#000">sell stop</div><div class="t" style="left:651px;top:1001px;width:97px;text-align:right;font-size:11px;color:#000">1.00</div><div class="t" style="left:752px;top:1001px;width:126px;text-align:right;font-size:11px;color:#000">eurusd.</div><div class="t" style="left:882px;top:1001px;width:139px;text-align:right;font-size:11px;color:#000">1.26164</div><div class="t" style="left:1025px;top:1001px;width:140px;text-align:right;font-size:11px;color:#000">1.26775</div><div class="t" style="left:1169px;top:1001px;width:140px;text-align:right;font-size:11px;color:#000">0.00000</div><div class="t" style="left:1313px;top:1001px;width:141px;text-align:right;font-size:11px;color:#000">1.31200</div><div class="t" style="left:1458px;top:1001px;width:140px;text-align:right;font-size:11px;color:#000"></div><div class="t" style="left:1602px;top:1001px;width:139px;text-align:right;font-size:11px;color:#000"></div><div class="t" style="left:1745px;top:1001px;width:162px;text-align:right;font-size:11px;color:#000"></div><div class="abs" style="left:16px;top:1016px;width:1895px;height:20px;background:#ececec"></div><div class="abs" style="left:202px;top:1016px;width:1px;height:20px;background:#d4d4d4"></div><div class="abs" style="left:521px;top:1016px;width:1px;height:20px;background:#d4d4d4"></div><div class="abs" style="left:651px;top:1016px;width:1px;height:20px;background:#d4d4d4"></div><div class="abs" style="left:752px;top:1016px;width:1px;height:20px;background:#d4d4d4"></div><div class="abs" style="left:882px;top:1016px;width:1px;height:20px;background:#d4d4d4"></div><div class="abs" style="left:1025px;top:1016px;width:1px;height:20px;background:#d4d4d4"></div><div class="abs" style="left:1169px;top:1016px;width:1px;height:20px;background:#d4d4d4"></div><div class="abs" style="left:1313px;top:1016px;width:1px;height:20px;background:#d4d4d4"></div><div class="abs" style="left:1458px;top:1016px;width:1px;height:20px;background:#d4d4d4"></div><div class="abs" style="left:1745px;top:1016px;width:1px;height:20px;background:#d4d4d4"></div><svg style="left:19px;top:1018px" width="15" height="16" viewBox="0 0 15 16"><path d="M1.5 0.5h7l3 3v10h-10z" fill="#fff" stroke="#555"/><path d="M8.5 0.5v3h3" fill="none" stroke="#555"/><circle cx="10.5" cy="12" r="3.3" fill="#e04a20" stroke="#fff" stroke-width=".6"/></svg><div class="t" style="left:41px;top:1021px;font-size:11px;color:#000">43377572</div><div class="t" style="left:202px;top:1021px;width:315px;text-align:right;font-size:11px;color:#000">2012.10.11 14:20</div><div class="t" style="left:521px;top:1021px;width:126px;text-align:right;font-size:11px;color:#000">sell stop</div><div class="t" style="left:651px;top:1021px;width:97px;text-align:right;font-size:11px;color:#000">1.00</div><div class="t" style="left:752px;top:1021px;width:126px;text-align:right;font-size:11px;color:#000">eurusd.</div><div class="t" style="left:882px;top:1021px;width:139px;text-align:right;font-size:11px;color:#000">1.28564</div><div class="t" style="left:1025px;top:1021px;width:140px;text-align:right;font-size:11px;color:#000">1.29175</div><div class="t" style="left:1169px;top:1021px;width:140px;text-align:right;font-size:11px;color:#000">0.00000</div><div class="t" style="left:1313px;top:1021px;width:141px;text-align:right;font-size:11px;color:#000">1.31200</div><div class="t" style="left:1458px;top:1021px;width:140px;text-align:right;font-size:11px;color:#000"></div><div class="t" style="left:1602px;top:1021px;width:139px;text-align:right;font-size:11px;color:#000"></div><div class="t" style="left:1745px;top:1021px;width:162px;text-align:right;font-size:11px;color:#000"></div><div class="abs" style="left:16px;top:1036px;width:1895px;height:20px;background:#ffffff"></div><div class="abs" style="left:202px;top:1036px;width:1px;height:20px;background:#d4d4d4"></div><div class="abs" style="left:521px;top:1036px;width:1px;height:20px;background:#d4d4d4"></div><div class="abs" style="left:651px;top:1036px;width:1px;height:20px;background:#d4d4d4"></div><div class="abs" style="left:752px;top:1036px;width:1px;height:20px;background:#d4d4d4"></div><div class="abs" style="left:882px;top:1036px;width:1px;height:20px;background:#d4d4d4"></div><div class="abs" style="left:1025px;top:1036px;width:1px;height:20px;background:#d4d4d4"></div><div class="abs" style="left:1169px;top:1036px;width:1px;height:20px;background:#d4d4d4"></div><div class="abs" style="left:1313px;top:1036px;width:1px;height:20px;background:#d4d4d4"></div><div class="abs" style="left:1458px;top:1036px;width:1px;height:20px;background:#d4d4d4"></div><div class="abs" style="left:1745px;top:1036px;width:1px;height:20px;background:#d4d4d4"></div><svg style="left:19px;top:1038px" width="15" height="16" viewBox="0 0 15 16"><path d="M1.5 0.5h7l3 3v10h-10z" fill="#fff" stroke="#555"/><path d="M8.5 0.5v3h3" fill="none" stroke="#555"/><circle cx="10.5" cy="12" r="3.3" fill="#e04a20" stroke="#fff" stroke-width=".6"/></svg><div class="t" style="left:41px;top:1041px;font-size:11px;color:#000">43416376</div><div class="t" style="left:202px;top:1041px;width:315px;text-align:right;font-size:11px;color:#000">2012.10.15 10:51</div><div class="t" style="left:521px;top:1041px;width:126px;text-align:right;font-size:11px;color:#000">sell stop</div><div class="t" style="left:651px;top:1041px;width:97px;text-align:right;font-size:11px;color:#000">1.00</div><div class="t" style="left:752px;top:1041px;width:126px;text-align:right;font-size:11px;color:#000">eurusd.</div><div class="t" style="left:882px;top:1041px;width:139px;text-align:right;font-size:11px;color:#000">1.29164</div><div class="t" style="left:1025px;top:1041px;width:140px;text-align:right;font-size:11px;color:#000">1.29775</div><div class="t" style="left:1169px;top:1041px;width:140px;text-align:right;font-size:11px;color:#000">0.00000</div><div class="t" style="left:1313px;top:1041px;width:141px;text-align:right;font-size:11px;color:#000">1.31200</div><div class="t" style="left:1458px;top:1041px;width:140px;text-align:right;font-size:11px;color:#000"></div><div class="t" style="left:1602px;top:1041px;width:139px;text-align:right;font-size:11px;color:#000"></div><div class="t" style="left:1745px;top:1041px;width:162px;text-align:right;font-size:11px;color:#000"></div><div class="abs" style="left:16px;top:1056px;width:1895px;height:20px;background:#ececec"></div><div class="abs" style="left:202px;top:1056px;width:1px;height:20px;background:#d4d4d4"></div><div class="abs" style="left:521px;top:1056px;width:1px;height:20px;background:#d4d4d4"></div><div class="abs" style="left:651px;top:1056px;width:1px;height:20px;background:#d4d4d4"></div><div class="abs" style="left:752px;top:1056px;width:1px;height:20px;background:#d4d4d4"></div><div class="abs" style="left:882px;top:1056px;width:1px;height:20px;background:#d4d4d4"></div><div class="abs" style="left:1025px;top:1056px;width:1px;height:20px;background:#d4d4d4"></div><div class="abs" style="left:1169px;top:1056px;width:1px;height:20px;background:#d4d4d4"></div><div class="abs" style="left:1313px;top:1056px;width:1px;height:20px;background:#d4d4d4"></div><div class="abs" style="left:1458px;top:1056px;width:1px;height:20px;background:#d4d4d4"></div><div class="abs" style="left:1745px;top:1056px;width:1px;height:20px;background:#d4d4d4"></div><svg style="left:19px;top:1058px" width="15" height="16" viewBox="0 0 15 16"><path d="M1.5 0.5h7l3 3v10h-10z" fill="#fff" stroke="#555"/><path d="M8.5 0.5v3h3" fill="none" stroke="#555"/><circle cx="10.5" cy="12" r="3.3" fill="#e04a20" stroke="#fff" stroke-width=".6"/></svg><div class="t" style="left:41px;top:1061px;font-size:11px;color:#000">43446340</div><div class="t" style="left:202px;top:1061px;width:315px;text-align:right;font-size:11px;color:#000">2012.10.16 14:52</div><div class="t" style="left:521px;top:1061px;width:126px;text-align:right;font-size:11px;color:#000">sell stop</div><div class="t" style="left:651px;top:1061px;width:97px;text-align:right;font-size:11px;color:#000">1.00</div><div class="t" style="left:752px;top:1061px;width:126px;text-align:right;font-size:11px;color:#000">eurusd.</div><div class="t" style="left:882px;top:1061px;width:139px;text-align:right;font-size:11px;color:#000">1.29764</div><div class="t" style="left:1025px;top:1061px;width:140px;text-align:right;font-size:11px;color:#000">1.30375</div><div class="t" style="left:1169px;top:1061px;width:140px;text-align:right;font-size:11px;color:#000">0.00000</div><div class="t" style="left:1313px;top:1061px;width:141px;text-align:right;font-size:11px;color:#000">1.31200</div><div class="t" style="left:1458px;top:1061px;width:140px;text-align:right;font-size:11px;color:#000"></div><div class="t" style="left:1602px;top:1061px;width:139px;text-align:right;font-size:11px;color:#000"></div><div class="t" style="left:1745px;top:1061px;width:162px;text-align:right;font-size:11px;color:#000"></div><div class="abs" style="left:16px;top:1076px;width:1895px;height:20px;background:#ffffff"></div><div class="abs" style="left:202px;top:1076px;width:1px;height:20px;background:#d4d4d4"></div><div class="abs" style="left:521px;top:1076px;width:1px;height:20px;background:#d4d4d4"></div><div class="abs" style="left:651px;top:1076px;width:1px;height:20px;background:#d4d4d4"></div><div class="abs" style="left:752px;top:1076px;width:1px;height:20px;background:#d4d4d4"></div><div class="abs" style="left:882px;top:1076px;width:1px;height:20px;background:#d4d4d4"></div><div class="abs" style="left:1025px;top:1076px;width:1px;height:20px;background:#d4d4d4"></div><div class="abs" style="left:1169px;top:1076px;width:1px;height:20px;background:#d4d4d4"></div><div class="abs" style="left:1313px;top:1076px;width:1px;height:20px;background:#d4d4d4"></div><div class="abs" style="left:1458px;top:1076px;width:1px;height:20px;background:#d4d4d4"></div><div class="abs" style="left:1745px;top:1076px;width:1px;height:20px;background:#d4d4d4"></div><svg style="left:19px;top:1078px" width="15" height="16" viewBox="0 0 15 16"><path d="M1.5 0.5h7l3 3v10h-10z" fill="#fff" stroke="#555"/><path d="M8.5 0.5v3h3" fill="none" stroke="#555"/><circle cx="10.5" cy="12" r="3.3" fill="#e04a20" stroke="#fff" stroke-width=".6"/></svg><div class="t" style="left:41px;top:1081px;font-size:11px;color:#000">43464550</div><div class="t" style="left:202px;top:1081px;width:315px;text-align:right;font-size:11px;color:#000">2012.10.17 12:15</div><div class="t" style="left:521px;top:1081px;width:126px;text-align:right;font-size:11px;color:#000">sell stop</div><div class="t" style="left:651px;top:1081px;width:97px;text-align:right;font-size:11px;color:#000">1.00</div><div class="t" style="left:752px;top:1081px;width:126px;text-align:right;font-size:11px;color:#000">eurusd.</div><div class="t" style="left:882px;top:1081px;width:139px;text-align:right;font-size:11px;color:#000">1.30364</div><div class="t" style="left:1025px;top:1081px;width:140px;text-align:right;font-size:11px;color:#000">1.30975</div><div class="t" style="left:1169px;top:1081px;width:140px;text-align:right;font-size:11px;color:#000">0.00000</div><div class="t" style="left:1313px;top:1081px;width:141px;text-align:right;font-size:11px;color:#000">1.31200</div><div class="t" style="left:1458px;top:1081px;width:140px;text-align:right;font-size:11px;color:#000"></div><div class="t" style="left:1602px;top:1081px;width:139px;text-align:right;font-size:11px;color:#000"></div><div class="t" style="left:1745px;top:1081px;width:162px;text-align:right;font-size:11px;color:#000"></div><div class="abs" style="left:16px;top:736px;width:1895px;height:1px;background:#d4d4d4"></div><div class="abs" style="left:16px;top:756px;width:1895px;height:1px;background:#d4d4d4"></div><div class="abs" style="left:16px;top:776px;width:1895px;height:1px;background:#d4d4d4"></div><div class="abs" style="left:16px;top:796px;width:1895px;height:1px;background:#d4d4d4"></div><div class="abs" style="left:16px;top:816px;width:1895px;height:1px;background:#d4d4d4"></div><div class="abs" style="left:16px;top:876px;width:1895px;height:1px;background:#d4d4d4"></div><div class="abs" style="left:16px;top:896px;width:1895px;height:1px;background:#d4d4d4"></div><div class="abs" style="left:16px;top:916px;width:1895px;height:1px;background:#d4d4d4"></div><div class="abs" style="left:16px;top:936px;width:1895px;height:1px;background:#d4d4d4"></div><div class="abs" style="left:16px;top:956px;width:1895px;height:1px;background:#d4d4d4"></div><div class="abs" style="left:16px;top:976px;width:1895px;height:1px;background:#d4d4d4"></div><div class="abs" style="left:16px;top:996px;width:1895px;height:1px;background:#d4d4d4"></div><div class="abs" style="left:16px;top:1016px;width:1895px;height:1px;background:#d4d4d4"></div><div class="abs" style="left:16px;top:1036px;width:1895px;height:1px;background:#d4d4d4"></div><div class="abs" style="left:16px;top:1056px;width:1895px;height:1px;background:#d4d4d4"></div><div class="abs" style="left:16px;top:1076px;width:1895px;height:1px;background:#d4d4d4"></div><div class="abs" style="left:16px;top:1096px;width:1895px;height:1px;background:#d4d4d4"></div><div class="abs" style="left:15px;top:1115px;width:1897px;height:1px;background:#000"></div><div class="abs" style="left:18px;top:1115px;width:80px;height:19px;border:2px solid #000;border-top:none;background:#fff"></div><div class="t" style="left:27px;top:1119px;font-size:11px;color:#000">Operaciones</div><div class="t" style="left:107px;top:1120px;font-size:11px;color:#666">Historial de cuentas</div><div class="abs" style="left:212px;top:1118px;width:1px;height:13px;background:#555"></div><div class="t" style="left:221px;top:1120px;font-size:11px;color:#666">Avisos</div><div class="abs" style="left:263px;top:1118px;width:1px;height:13px;background:#555"></div><div class="t" style="left:272px;top:1120px;font-size:11px;color:#666">Buzón</div><div class="abs" style="left:312px;top:1118px;width:1px;height:13px;background:#555"></div><div class="t" style="left:321px;top:1120px;font-size:11px;color:#666">Expertos</div><div class="abs" style="left:375px;top:1118px;width:1px;height:13px;background:#555"></div><div class="t" style="left:384px;top:1120px;font-size:11px;color:#666">Diario</div><div class="abs" style="left:422px;top:1118px;width:1px;height:13px;background:#555"></div><div class="abs" style="left:0px;top:1137px;width:1920px;height:1px;background:#a0a0a0"></div><div class="abs" style="left:0px;top:1138px;width:1920px;height:22px;background:#f0f0f0"></div><div class="t" style="left:2px;top:1145px;font-size:11px;color:#000">Para obtener ayuda, pulse F1</div><div class="abs" style="left:1190px;top:1141px;width:1px;height:16px;background:#a0a0a0"></div><div class="abs" style="left:1191px;top:1141px;width:1px;height:16px;background:#fff"></div><div class="abs" style="left:1306px;top:1141px;width:1px;height:16px;background:#a0a0a0"></div><div class="abs" style="left:1307px;top:1141px;width:1px;height:16px;background:#fff"></div><div class="abs" style="left:1408px;top:1141px;width:1px;height:16px;background:#a0a0a0"></div><div class="abs" style="left:1409px;top:1141px;width:1px;height:16px;background:#fff"></div><div class="abs" style="left:1479px;top:1141px;width:1px;height:16px;background:#a0a0a0"></div><div class="abs" style="left:1480px;top:1141px;width:1px;height:16px;background:#fff"></div><div class="abs" style="left:1550px;top:1141px;width:1px;height:16px;background:#a0a0a0"></div><div class="abs" style="left:1551px;top:1141px;width:1px;height:16px;background:#fff"></div><div class="abs" style="left:1618px;top:1141px;width:1px;height:16px;background:#a0a0a0"></div><div class="abs" style="left:1619px;top:1141px;width:1px;height:16px;background:#fff"></div><div class="abs" style="left:1688px;top:1141px;width:1px;height:16px;background:#a0a0a0"></div><div class="abs" style="left:1689px;top:1141px;width:1px;height:16px;background:#fff"></div><div class="abs" style="left:1754px;top:1141px;width:1px;height:16px;background:#a0a0a0"></div><div class="abs" style="left:1755px;top:1141px;width:1px;height:16px;background:#fff"></div><div class="t" style="left:1312px;top:1145px;font-size:11px;color:#000">2012.10.16 12:00</div><div class="t" style="left:1414px;top:1145px;font-size:11px;color:#000">O: 1.30069</div><div class="t" style="left:1485px;top:1145px;font-size:11px;color:#000">H: 1.30604</div><div class="t" style="left:1556px;top:1145px;font-size:11px;color:#000">L: 1.30012</div><div class="t" style="left:1624px;top:1145px;font-size:11px;color:#000">C: 1.30590</div><div class="t" style="left:1694px;top:1145px;font-size:11px;color:#000">V: 34655</div><div class="t" style="left:1817px;top:1145px;font-size:11px;color:#000">2669/1 kb</div><svg style="left:1760px;top:1144px" width="24" height="12" viewBox="0 0 24 12"><rect x="0" y="0" width="2" height="12" fill="#6a8a20"/><rect x="3" y="0" width="2" height="12" fill="#6a8a20"/><rect x="6" y="0" width="2" height="12" fill="#6a8a20"/><rect x="9" y="0" width="2" height="12" fill="#6a8a20"/><rect x="12" y="0" width="2" height="12" fill="#6a8a20"/><rect x="15" y="0" width="2" height="12" fill="#2a6a8a"/><rect x="18" y="0" width="2" height="12" fill="#2a6a8a"/><rect x="21" y="0" width="2" height="12" fill="#2a6a8a"/></svg><svg style="left:1902px;top:1146px" width="12" height="12" viewBox="0 0 12 12"><path d="M12 0L0 12M12 4L4 12M12 8L8 12" stroke="#aaa"/></svg><div class="abs" style="left:1912px;top:691px;width:1px;height:424px;background:#e4e4e4"></div><div class="abs" style="left:1916px;top:97px;width:1px;height:1063px;background:#7a8088"></div><div class="abs" style="left:1917px;top:23px;width:3px;height:1137px;background:linear-gradient(90deg,#e8f8fc,#d8f0f8)"></div><div class="abs" style="left:0px;top:1160px;width:1920px;height:40px;background:linear-gradient(180deg,#3a4654 0,#1c2430 2px,#101820 50%,#0a1016 100%)"></div><div class="abs" style="left:0px;top:1160px;width:1920px;height:1px;background:#5a6674"></div><svg style="left:7px;top:1161px" width="40" height="39" viewBox="0 0 40 39"><defs><radialGradient id="orb" cx="50%" cy="35%" r="60%"><stop offset="0" stop-color="#9ad4f4"/><stop offset=".5" stop-color="#2a7ac0"/><stop offset="1" stop-color="#0a3a6a"/></radialGradient></defs><circle cx="20" cy="19.5" r="18.5" fill="url(#orb)" stroke="#0c2a44"/><path d="M11 12q4-2 8 0v7q-4-2-8 0z" fill="#f04a2a"/><path d="M21 12q4 2 8 0v7q-4 2-8 0z" fill="#6ac03a"/><path d="M11 21q4-2 8 0v7q-4-2-8 0z" fill="#2a9ae0"/><path d="M21 21q4 2 8 0v7q-4 2-8 0z" fill="#f4c020"/></svg><div class="abs" style="left:60px;top:1166px;width:58px;height:28px;border:1px solid #3a4450;border-radius:2px;background:#0a0e12"></div><div class="t" style="left:64px;top:1170px;font-family:'Liberation Serif',serif;font-size:17px;color:#fff;letter-spacing:-0.3px">Google</div><svg style="left:143px;top:1164px" width="32" height="32" viewBox="0 0 32 32"><path d="M16 4a12 12 0 1 0 11.5 15h-7.5a5 5 0 0 1-8.5 0h16a12 12 0 0 0-11.5-15zm-4.5 10a5 5 0 0 1 9 0z" fill="#3ab4ec"/><path d="M4 26q-4-6 8-16t18-6q2 3-3 9" stroke="#f0c020" stroke-width="2.5" fill="none"/></svg><svg style="left:205px;top:1167px" width="32" height="28" viewBox="0 0 32 28"><path d="M1 3h9l2 3h19v21h-30z" fill="#e8d48a" stroke="#b8a050"/><rect x="3" y="2" width="4" height="2" fill="#2ab02a"/><path d="M10 14h12v12h-3v-8h-6v8h-3z" fill="#7ac4ec"/></svg><div class="abs" style="left:254px;top:1161px;width:58px;height:38px;border:1px solid #5a6470;border-radius:3px;background:linear-gradient(180deg,#6a7480,#3a4450 60%,#2a323c)"></div><svg style="left:268px;top:1166px" width="28" height="28" viewBox="0 0 28 28"><circle cx="14" cy="14" r="13.5" fill="#db4437"/><path d="M14 14 L2.3 20.75 A13.5 13.5 0 0 0 25.7 20.75 Z" fill="#0f9d58"/><path d="M14 14 L25.7 20.75 A13.5 13.5 0 0 0 14 0.5 L14 0.5 Z" fill="#f4c20d"/><circle cx="14" cy="14" r="6" fill="#fff"/><circle cx="14" cy="14" r="4.6" fill="#4285f4"/></svg><div class="abs" style="left:316px;top:1161px;width:58px;height:38px;border:1px solid #f0f0f0;border-radius:3px;background:linear-gradient(180deg,#d8dade 0,#a8aaae 45%,#7a7c80 60%,#8a8c90 100%)"></div><svg style="left:329px;top:1164px" width="32" height="32" viewBox="0 0 32 32"><defs><linearGradient id="xtbg" x1="0" y1="0" x2="0" y2="1"><stop offset="0" stop-color="#06324a"/><stop offset=".45" stop-color="#0a78ae"/><stop offset=".55" stop-color="#1a4a50"/><stop offset="1" stop-color="#0e2a24"/></linearGradient></defs><circle cx="16" cy="16" r="15.8" fill="url(#xtbg)"/><path d="M5 14 L25.5 8.2 L18.6 15.8 L26.2 23.8 L13.8 20.6 L5 19.1 L10.5 16.6 Z" fill="#e01a10" stroke="#fff" stroke-width="0.8"/></svg><svg style="left:1700px;top:1176px" width="10" height="6" viewBox="0 0 10 6"><path d="M0 6l5-5 5 5z" fill="#fff"/></svg><svg style="left:1721px;top:1174px" width="16" height="16" viewBox="0 0 16 16"><path d="M1 0v16M2 1h10l-2 3 2 3h-10z" stroke="#fff" fill="#fff" stroke-width="1.2"/></svg><svg style="left:1745px;top:1174px" width="18" height="16" viewBox="0 0 18 16"><rect x="5" y="4" width="12" height="9" fill="none" stroke="#fff" stroke-width="1.4"/><path d="M2 0v8M0 3h4M8 15h6" stroke="#fff" stroke-width="1.4"/></svg><svg style="left:1770px;top:1174px" width="18" height="16" viewBox="0 0 18 16"><path d="M1 5h3l5-4v14l-5-4h-3z" fill="#fff"/><path d="M12 4q2 4 0 8M14 2q4 6 0 12" stroke="#fff" fill="none"/></svg><svg style="left:1793px;top:1173px" width="18" height="18" viewBox="0 0 18 18"><path d="M5 1l4 3-4 3-4-3zM13 1l4 3-4 3-4-3zM5 8l4 3-4 3-4-3zM13 8l4 3-4 3-4-3z" fill="#5ab4ec"/><circle cx="13" cy="14" r="4" fill="#2a9a3a"/></svg><div class="t" style="left:1841px;top:1166px;font-size:12px;color:#fff">15:24</div><div class="t" style="left:1825px;top:1183px;font-size:12px;color:#fff">17/10/2012</div><div class="abs" style="left:1897px;top:1161px;width:23px;height:39px;border-left:1px solid #4a5460;background:linear-gradient(180deg,#2a3440,#141c24)"></div><div class="abs" style="left:639px;top:420px;width:640px;height:330px;background:rgba(0,0,0,0.42);border-radius:10px;filter:blur(5px)"></div><div class="abs" style="left:645px;top:422px;width:627px;height:316px;border:1px solid #3a3e44;border-radius:6px 6px 4px 4px;background:#c0daf0;overflow:hidden"></div><div class="abs" style="left:646px;top:423px;width:625px;height:27px;border-radius:5px 5px 0 0;background:linear-gradient(90deg,#aeb2b6 0,#c6cacd 70px,#b8bcc0 118px,#5a5e64 140px,#1c2026 165px,#101418 260px,#15191e 470px,#3a3e44 505px,#6c7076 540px,#4c5056 625px)"></div><div class="abs" style="left:646px;top:423px;width:625px;height:12px;border-radius:5px 5px 0 0;background:linear-gradient(180deg,rgba(255,255,255,.18),rgba(255,255,255,0))"></div><div class="abs" style="left:646px;top:450px;width:5px;height:287px;background:linear-gradient(180deg,#c4c8cc 0,#bcc0c4 60px,#44484e 85px,#101418 140px,#14181e 205px,#6a86a0 235px,#b4d0ea 252px,#c6dff4 287px)"></div><div class="abs" style="left:1266px;top:450px;width:5px;height:287px;background:linear-gradient(180deg,#2a2e34 0,#1c2026 40px,#5c6066 75px,#30343a 110px,#0e1216 175px,#14181e 205px,#6a86a0 235px,#b4d0ea 252px,#c6dff4 287px)"></div><div class="abs" style="left:646px;top:731px;width:625px;height:6px;border-radius:0 0 4px 4px;background:linear-gradient(180deg,#c8e0f6,#a8c8e6)"></div><div class="abs" style="left:646px;top:424px;width:125px;height:24px;background:radial-gradient(ellipse at 45% 50%,rgba(220,224,228,.9) 0,rgba(205,210,215,.7) 50%,rgba(190,195,200,0) 78%)"></div><div class="t" style="left:652px;top:430px;font-size:12px;color:#000;letter-spacing:-0.3px">Escalera guevon_35</div><div class="abs" style="left:1190px;top:422px;width:29px;height:18px;border:1px solid #1a1e24;border-top:none;border-radius:0 0 0 4px;background:linear-gradient(180deg,#6a727c,#3a424c 50%,#2a3038)"></div><div class="t" style="left:1200px;top:424px;font-size:13px;font-weight:bold;color:#fff">?</div><div class="abs" style="left:1219px;top:422px;width:47px;height:18px;border:1px solid #1a1e24;border-top:none;border-radius:0 0 4px 0;background:linear-gradient(180deg,#e8a090,#c84a30 50%,#b03018)"></div><div class="t" style="left:1236px;top:423px;font-size:13px;font-weight:bold;color:#fff">✕</div><div class="abs" style="left:651px;top:450px;width:615px;height:281px;background:#f0f0f0;border:1px solid #8a96a4"></div><div class="abs" style="left:658px;top:478px;width:599px;height:216px;background:#fff;border:1px solid #a0a0a0"></div><div class="abs" style="left:660px;top:460px;width:44px;height:19px;background:linear-gradient(180deg,#f2f2f2,#e0e0e0);border:1px solid #a0a0a0;border-bottom:none"></div><div class="t" style="left:665px;top:464px;font-size:11px;color:#000">Común</div><div class="abs" style="left:703px;top:458px;width:58px;height:21px;background:#fff;border:1px solid #a0a0a0;border-bottom:none"></div><div class="t" style="left:711px;top:462px;font-size:11px;color:#000">Entradas</div><div class="abs" style="left:670px;top:488px;width:465px;height:194px;background:#fff;border:1px solid #a0a0a0"></div><div class="abs" style="left:671px;top:489px;width:446px;height:24px;background:linear-gradient(180deg,#ffffff 0,#ffffff 45%,#f1f3f6 46%,#eef0f3 100%)"></div><div class="abs" style="left:671px;top:512px;width:446px;height:1px;background:#d5d5d5"></div><div class="abs" style="left:893px;top:489px;width:1px;height:23px;background:#e0e0e0"></div><div class="t" style="left:678px;top:496px;font-size:11px;color:#000">Variable</div><div class="t" style="left:900px;top:496px;font-size:11px;color:#000">Valor</div><div class="abs" style="left:671px;top:514px;width:446px;height:20px;background:#fff"></div><div class="abs" style="left:671px;top:533px;width:446px;height:1px;background:#d4d4d4"></div><div class="abs" style="left:893px;top:514px;width:1px;height:20px;background:#d4d4d4"></div><svg style="left:674px;top:515px" width="16" height="17" viewBox="0 0 16 17"><path d="M0.5 1.5h11l4 3v11q-2-1.5-4 0t-3.5 0-3.5 0-4 0z" fill="#f0e08a" stroke="#c8b040"/><text x="2" y="11" font-size="9" font-family="Liberation Sans" fill="#333">ab</text></svg><div class="t" style="left:693px;top:519px;font-size:11px;color:#000">q5</div><div class="t" style="left:898px;top:519px;font-size:11px;color:#000">&nbsp;NroEscCubrir = Número escalones (arriba/...</div><div class="abs" style="left:671px;top:534px;width:446px;height:20px;background:#ececec"></div><div class="abs" style="left:671px;top:553px;width:446px;height:1px;background:#d4d4d4"></div><div class="abs" style="left:893px;top:534px;width:1px;height:20px;background:#d4d4d4"></div><svg style="left:674px;top:535px" width="16" height="17" viewBox="0 0 16 17"><path d="M0.5 1.5h11l4 3v11q-2-1.5-4 0t-3.5 0-3.5 0-4 0z" fill="#9cc8ec" stroke="#4a88c0"/><text x="1.5" y="11" font-size="7" font-weight="bold" font-family="Liberation Sans" fill="#1a3a6a">123</text></svg><div class="t" style="left:693px;top:539px;font-size:11px;color:#000">NroEscCubrir</div><div class="t" style="left:898px;top:539px;font-size:11px;color:#000">4</div><div class="abs" style="left:671px;top:554px;width:446px;height:20px;background:#fff"></div><div class="abs" style="left:671px;top:573px;width:446px;height:1px;background:#d4d4d4"></div><div class="abs" style="left:893px;top:554px;width:1px;height:20px;background:#d4d4d4"></div><svg style="left:674px;top:555px" width="16" height="17" viewBox="0 0 16 17"><path d="M0.5 1.5h11l4 3v11q-2-1.5-4 0t-3.5 0-3.5 0-4 0z" fill="#f0e08a" stroke="#c8b040"/><text x="2" y="11" font-size="9" font-family="Liberation Sans" fill="#333">ab</text></svg><div class="t" style="left:693px;top:559px;font-size:11px;color:#000">q6</div><div class="t" style="left:898px;top:559px;font-size:11px;color:#000">&nbsp;DDactual = Draw-Down anterior a la apert...</div><div class="abs" style="left:671px;top:574px;width:446px;height:20px;background:#ececec"></div><div class="abs" style="left:671px;top:593px;width:446px;height:1px;background:#d4d4d4"></div><div class="abs" style="left:893px;top:574px;width:1px;height:20px;background:#d4d4d4"></div><svg style="left:674px;top:575px" width="16" height="17" viewBox="0 0 16 17"><path d="M0.5 1.5h11l4 3v11q-2-1.5-4 0t-3.5 0-3.5 0-4 0z" fill="#a8dcec" stroke="#4aa0c0"/><text x="1.5" y="11" font-size="7" font-weight="bold" font-family="Liberation Sans" fill="#1a3a6a">½</text></svg><div class="t" style="left:693px;top:579px;font-size:11px;color:#000">DDactual</div><div class="t" style="left:898px;top:579px;font-size:11px;color:#000">5500.0</div><div class="abs" style="left:671px;top:594px;width:446px;height:20px;background:#fff"></div><div class="abs" style="left:671px;top:613px;width:446px;height:1px;background:#d4d4d4"></div><div class="abs" style="left:893px;top:594px;width:1px;height:20px;background:#d4d4d4"></div><svg style="left:674px;top:595px" width="16" height="17" viewBox="0 0 16 17"><path d="M0.5 1.5h11l4 3v11q-2-1.5-4 0t-3.5 0-3.5 0-4 0z" fill="#f0e08a" stroke="#c8b040"/><text x="2" y="11" font-size="9" font-family="Liberation Sans" fill="#333">ab</text></svg><div class="t" style="left:693px;top:599px;font-size:11px;color:#000">q7</div><div class="t" style="left:898px;top:599px;font-size:11px;color:#000">&nbsp;BENEFICIOeuros = Beneficio deseado en...</div><div class="abs" style="left:671px;top:614px;width:446px;height:20px;background:#ececec"></div><div class="abs" style="left:671px;top:633px;width:446px;height:1px;background:#d4d4d4"></div><div class="abs" style="left:893px;top:614px;width:1px;height:20px;background:#d4d4d4"></div><svg style="left:674px;top:615px" width="16" height="17" viewBox="0 0 16 17"><path d="M0.5 1.5h11l4 3v11q-2-1.5-4 0t-3.5 0-3.5 0-4 0z" fill="#a8dcec" stroke="#4aa0c0"/><text x="1.5" y="11" font-size="7" font-weight="bold" font-family="Liberation Sans" fill="#1a3a6a">½</text></svg><div class="t" style="left:693px;top:619px;font-size:11px;color:#000">BENEFICIOeuros</div><div class="t" style="left:898px;top:619px;font-size:11px;color:#000">2000.0</div><div class="abs" style="left:671px;top:634px;width:446px;height:20px;background:#fff"></div><div class="abs" style="left:671px;top:653px;width:446px;height:1px;background:#d4d4d4"></div><div class="abs" style="left:893px;top:634px;width:1px;height:20px;background:#d4d4d4"></div><svg style="left:674px;top:635px" width="16" height="17" viewBox="0 0 16 17"><path d="M0.5 1.5h11l4 3v11q-2-1.5-4 0t-3.5 0-3.5 0-4 0z" fill="#f0e08a" stroke="#c8b040"/><text x="2" y="11" font-size="9" font-family="Liberation Sans" fill="#333">ab</text></svg><div class="t" style="left:693px;top:639px;font-size:11px;color:#000">q10</div><div class="t" style="left:898px;top:639px;font-size:11px;color:#000">NumEscalonesStop = Número escalones ...</div><div class="abs" style="left:671px;top:654px;width:446px;height:20px;background:#ececec"></div><div class="abs" style="left:671px;top:673px;width:446px;height:1px;background:#d4d4d4"></div><div class="abs" style="left:893px;top:654px;width:1px;height:20px;background:#d4d4d4"></div><svg style="left:674px;top:655px" width="16" height="17" viewBox="0 0 16 17"><path d="M0.5 1.5h11l4 3v11q-2-1.5-4 0t-3.5 0-3.5 0-4 0z" fill="#9cc8ec" stroke="#4a88c0"/><text x="1.5" y="11" font-size="7" font-weight="bold" font-family="Liberation Sans" fill="#1a3a6a">123</text></svg><div class="t" style="left:693px;top:659px;font-size:11px;color:#000">NumEscalonesStop</div><div class="t" style="left:898px;top:659px;font-size:11px;color:#000">1</div><div class="abs" style="left:1117px;top:489px;width:17px;height:192px;background:#f0f0f0;border-left:1px solid #e4e4e4"></div><svg style="left:1121px;top:496px" width="9" height="5" viewBox="0 0 9 5"><path d="M0 5l4.5-5 4.5 5z" fill="#333"/></svg><svg style="left:1121px;top:671px" width="9" height="5" viewBox="0 0 9 5"><path d="M0 0l4.5 5 4.5-5z" fill="#333"/></svg><div class="abs" style="left:1118px;top:568px;width:14px;height:95px;border:1px solid #999;border-radius:2px;background:linear-gradient(90deg,#e8e8e8,#d4d4d4)"></div><div class="abs" style="left:1121px;top:612px;width:8px;height:1px;background:#555"></div><div class="abs" style="left:1121px;top:615px;width:8px;height:1px;background:#555"></div><div class="abs" style="left:1121px;top:618px;width:8px;height:1px;background:#555"></div><div class="abs" style="left:1143px;top:627px;width:103px;height:21px;border:1px solid #707070;border-radius:3px;background:linear-gradient(180deg,#f2f2f2 0,#ebebeb 50%,#dddddd 51%,#cfcfcf 100%)"></div><div class="t" style="left:1143px;top:632px;width:103px;text-align:center;font-size:11px;color:#000">Cargar</div><div class="abs" style="left:1143px;top:660px;width:103px;height:21px;border:1px solid #707070;border-radius:3px;background:linear-gradient(180deg,#f2f2f2 0,#ebebeb 50%,#dddddd 51%,#cfcfcf 100%)"></div><div class="t" style="left:1143px;top:665px;width:103px;text-align:center;font-size:11px;color:#000">Guardar</div><div class="abs" style="left:1023px;top:702px;width:73px;height:21px;border:1px solid #3c7fb1;border-radius:3px;background:linear-gradient(180deg,#f2f2f2 0,#ebebeb 50%,#dddddd 51%,#cfcfcf 100%);box-shadow:inset 0 0 0 1px #a8e0f8"></div><div class="t" style="left:1023px;top:707px;width:73px;text-align:center;font-size:11px;color:#000">Aceptar</div><div class="abs" style="left:1104px;top:702px;width:73px;height:21px;border:1px solid #707070;border-radius:3px;background:linear-gradient(180deg,#f2f2f2 0,#ebebeb 50%,#dddddd 51%,#cfcfcf 100%)"></div><div class="t" style="left:1104px;top:707px;width:73px;text-align:center;font-size:11px;color:#000">Cancelar</div><div class="abs" style="left:1185px;top:702px;width:73px;height:21px;border:1px solid #707070;border-radius:3px;background:linear-gradient(180deg,#f2f2f2 0,#ebebeb 50%,#dddddd 51%,#cfcfcf 100%)"></div><div class="t" style="left:1185px;top:707px;width:73px;text-align:center;font-size:11px;color:#000">Restablecer</div></body></html>
